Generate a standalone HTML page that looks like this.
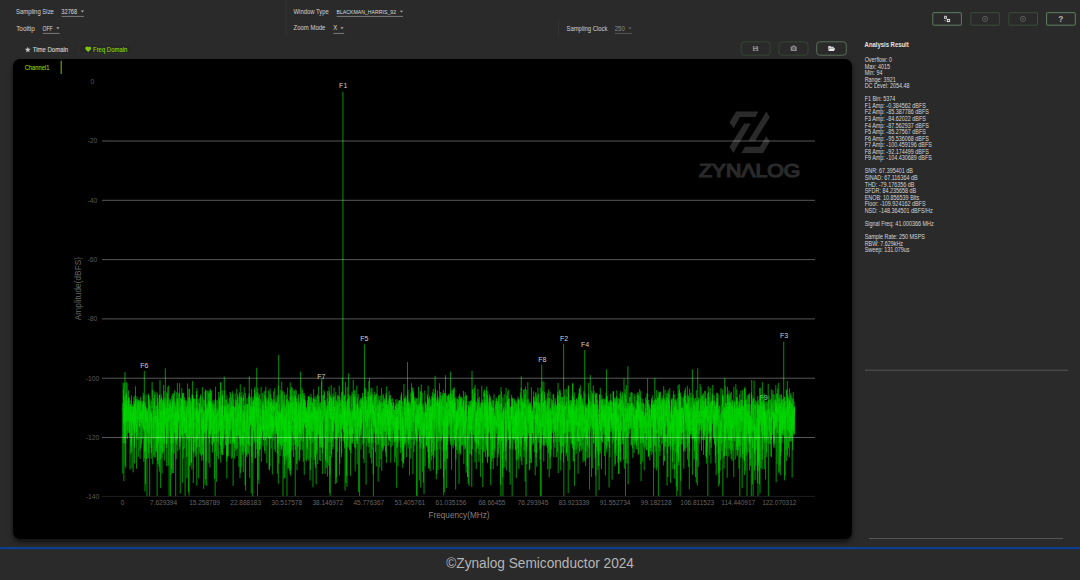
<!DOCTYPE html>
<html><head><meta charset="utf-8"><style>
html,body{margin:0;padding:0;width:1080px;height:580px;overflow:hidden;background:#2a2a2a;}
#panel{position:absolute;left:13px;top:59px;width:839px;height:480px;background:#000;border-radius:7px;box-shadow:0 3px 5px rgba(0,0,0,.6);}
svg{position:absolute;left:0;top:0;font-family:"Liberation Sans", sans-serif;}
</style></head><body>
<div id="panel"></div>
<svg width="1080" height="580" viewBox="0 0 1080 580">
<text x="15.94" y="13.77" font-size="6.6" fill="#d2d2d2" font-weight="normal" textLength="38.00" lengthAdjust="spacingAndGlyphs">Sampling Size</text><text x="61.34" y="13.77" font-size="6.6" fill="#dedede" font-weight="normal" textLength="15.90" lengthAdjust="spacingAndGlyphs">32768</text><text x="16.14" y="30.57" font-size="6.6" fill="#d2d2d2" font-weight="normal" textLength="18.60" lengthAdjust="spacingAndGlyphs">Tooltip</text><text x="42.44" y="30.57" font-size="6.6" fill="#dedede" font-weight="normal" textLength="10.30" lengthAdjust="spacingAndGlyphs">OFF</text><text x="293.54" y="13.87" font-size="6.6" fill="#d2d2d2" font-weight="normal" textLength="35.20" lengthAdjust="spacingAndGlyphs">Window Type</text><text x="336.45" y="13.73" font-size="6.2" fill="#dedede" font-weight="normal" textLength="59.67" lengthAdjust="spacingAndGlyphs">BLACKMAN_HARRIS_92</text><text x="293.54" y="30.47" font-size="6.6" fill="#d2d2d2" font-weight="normal" textLength="31.80" lengthAdjust="spacingAndGlyphs">Zoom Mode</text><text x="333.34" y="30.47" font-size="6.6" fill="#dedede" font-weight="normal" textLength="4.00" lengthAdjust="spacingAndGlyphs">X</text><text x="566.44" y="30.77" font-size="6.6" fill="#d2d2d2" font-weight="normal" textLength="41.10" lengthAdjust="spacingAndGlyphs">Sampling Clock</text><text x="614.74" y="30.77" font-size="6.6" fill="#8c8c8c" font-weight="normal" textLength="10.10" lengthAdjust="spacingAndGlyphs">250</text><path d="M80.80,10.50 L84.00,10.50 L82.40,12.40 Z" fill="#b0b0b0"/><rect x="61.6" y="15.90" width="22.40" height="1" fill="#7a7a7a"/><path d="M56.30,27.30 L59.50,27.30 L57.90,29.20 Z" fill="#b0b0b0"/><rect x="42.7" y="32.90" width="16.90" height="1" fill="#7a7a7a"/><path d="M399.90,10.70 L403.10,10.70 L401.50,12.60 Z" fill="#b0b0b0"/><rect x="336.7" y="15.90" width="66.30" height="1" fill="#7a7a7a"/><path d="M340.40,27.30 L343.60,27.30 L342.00,29.20 Z" fill="#b0b0b0"/><rect x="333.3" y="32.90" width="10.90" height="1" fill="#7a7a7a"/><path d="M628.40,27.60 L631.60,27.60 L630.00,29.50 Z" fill="#6a6a6a"/><rect x="615" y="32.90" width="17.00" height="1" fill="#555"/><rect x="285.6" y="0" width="1" height="35.5" fill="#333333"/><rect x="558" y="21" width="1" height="15" fill="#333333"/><rect x="932.80" y="12.70" width="28.60" height="12.50" rx="0.5" fill="none" stroke="#5f7d5f" stroke-width="1"/><rect x="970.80" y="12.70" width="28.50" height="12.50" rx="0.5" fill="none" stroke="#3b4c3b" stroke-width="1"/><rect x="1008.90" y="12.70" width="28.60" height="12.50" rx="0.5" fill="none" stroke="#3b4c3b" stroke-width="1"/><rect x="1046.60" y="12.70" width="28.70" height="12.50" rx="0.5" fill="none" stroke="#5f7d5f" stroke-width="1"/><rect x="944.0" y="15.8" width="3.0" height="3.1" fill="#b8b8b8"/><rect x="945.0" y="16.9" width="1.0" height="1.0" fill="#555"/><rect x="946.8" y="18.9" width="3.3" height="3.2" fill="#dcdcdc"/><rect x="947.9" y="20.0" width="1.2" height="1.0" fill="#444"/><rect x="944.0" y="20.3" width="1.9" height="0.8" fill="#8a8a8a"/><circle cx="985.0" cy="18.9" r="2.6" fill="none" stroke="#6a6a6a" stroke-width="0.75"/><circle cx="985.0" cy="18.9" r="0.9" fill="#5a5a5a"/><circle cx="1023.0" cy="18.9" r="2.6" fill="none" stroke="#6a6a6a" stroke-width="0.75"/><circle cx="1023.0" cy="18.9" r="0.9" fill="#5a5a5a"/><text x="1060.80" y="21.89" font-size="8.4" fill="#b4b4b4" font-weight="bold" text-anchor="middle">?</text><rect x="741.20" y="41.90" width="29.00" height="13.30" rx="3" fill="none" stroke="#354535" stroke-width="1"/><rect x="779.00" y="41.90" width="29.00" height="13.30" rx="3" fill="none" stroke="#354535" stroke-width="1"/><rect x="816.70" y="41.80" width="29.60" height="13.40" rx="3" fill="none" stroke="#566f56" stroke-width="1"/><path d="M752.9,45.9 h4.2 l1.1,1.1 v4.0 h-5.3 z" fill="#8a8a8a"/><rect x="753.9" y="46.4" width="2.6" height="1.3" fill="#2a2a2a"/><rect x="754.3" y="49.0" width="2.5" height="1.3" fill="#2a2a2a"/><path d="M790.7,46.4 h1.5 l0.5,-0.9 h2.0 l0.5,0.9 h1.5 v4.6 h-6 z" fill="#8a8a8a"/><circle cx="793.7" cy="48.6" r="1.3" fill="#2a2a2a"/><circle cx="793.7" cy="48.6" r="0.7" fill="#8a8a8a"/><path d="M828.2,46.0 h2.4 l0.6,0.7 h2.6 v1.2 h-4.5 l-1.1,3.0 z" fill="#d0d0d0"/><path d="M829.6,48.3 h5.6 l-1.2,2.7 h-5.7 z" fill="#e8e8e8"/><rect x="79.4" y="44.7" width="52.4" height="8.8" fill="#272727" stroke="#303030" stroke-width="0.8"/><polygon points="27.80,46.70 28.59,48.71 30.75,48.84 29.08,50.22 29.62,52.31 27.80,51.15 25.98,52.31 26.52,50.22 24.85,48.84 27.01,48.71" fill="#c4c4c4"/><text x="32.83" y="51.84" font-size="6.8" fill="#d4d4d4" font-weight="normal" textLength="35.31" lengthAdjust="spacingAndGlyphs" stroke="#d4d4d4" stroke-width="0.12">Time Domain</text><path d="M88.2,52.1 L85.6,49.4 A1.45,1.45 0 0 1 88.2,47.3 A1.45,1.45 0 0 1 90.8,49.4 Z" fill="#7cc800"/><text x="93.03" y="51.84" font-size="6.8" fill="#86cc00" font-weight="normal" textLength="34.31" lengthAdjust="spacingAndGlyphs" stroke="#86cc00" stroke-width="0.15">Freq Domain</text><text x="24.72" y="70.01" font-size="7.0" fill="#86c800" font-weight="normal" textLength="24.62" lengthAdjust="spacingAndGlyphs" stroke="#86c800" stroke-width="0.15">Channel1</text><rect x="60.6" y="60.7" width="1.2" height="13.3" fill="#6aa000"/><text x="864.62" y="46.71" font-size="7.0" fill="#e4e4e4" font-weight="bold" textLength="44.12" lengthAdjust="spacingAndGlyphs">Analysis Result</text><text x="864.65" y="62.07" font-size="6.6" fill="#d6d6d6" textLength="27.41" lengthAdjust="spacingAndGlyphs">Overflow: 0</text><text x="864.65" y="68.62" font-size="6.6" fill="#d6d6d6" textLength="25.31" lengthAdjust="spacingAndGlyphs">Max: 4015</text><text x="864.65" y="75.18" font-size="6.6" fill="#d6d6d6" textLength="17.77" lengthAdjust="spacingAndGlyphs">Min: 94</text><text x="864.65" y="81.73" font-size="6.6" fill="#d6d6d6" textLength="31.04" lengthAdjust="spacingAndGlyphs">Range: 3921</text><text x="864.65" y="88.28" font-size="6.6" fill="#d6d6d6" textLength="44.89" lengthAdjust="spacingAndGlyphs">DC Level: 2054.48</text><text x="864.65" y="101.39" font-size="6.6" fill="#d6d6d6" textLength="30.73" lengthAdjust="spacingAndGlyphs">F1 Bin: 5374</text><text x="864.65" y="107.94" font-size="6.6" fill="#d6d6d6" textLength="61.16" lengthAdjust="spacingAndGlyphs">F1 Amp: -0.384562 dBFS</text><text x="864.65" y="114.49" font-size="6.6" fill="#d6d6d6" textLength="64.17" lengthAdjust="spacingAndGlyphs">F2 Amp: -85.387786 dBFS</text><text x="864.65" y="121.05" font-size="6.6" fill="#d6d6d6" textLength="61.16" lengthAdjust="spacingAndGlyphs">F3 Amp: -84.62022 dBFS</text><text x="864.65" y="127.60" font-size="6.6" fill="#d6d6d6" textLength="64.17" lengthAdjust="spacingAndGlyphs">F4 Amp: -87.562937 dBFS</text><text x="864.65" y="134.15" font-size="6.6" fill="#d6d6d6" textLength="61.16" lengthAdjust="spacingAndGlyphs">F5 Amp: -85.27567 dBFS</text><text x="864.65" y="140.71" font-size="6.6" fill="#d6d6d6" textLength="64.17" lengthAdjust="spacingAndGlyphs">F6 Amp: -95.536068 dBFS</text><text x="864.65" y="147.26" font-size="6.6" fill="#d6d6d6" textLength="67.18" lengthAdjust="spacingAndGlyphs">F7 Amp: -100.459196 dBFS</text><text x="864.65" y="153.81" font-size="6.6" fill="#d6d6d6" textLength="64.17" lengthAdjust="spacingAndGlyphs">F8 Amp: -92.174499 dBFS</text><text x="864.65" y="160.37" font-size="6.6" fill="#d6d6d6" textLength="67.18" lengthAdjust="spacingAndGlyphs">F9 Amp: -104.430689 dBFS</text><text x="864.65" y="173.47" font-size="6.6" fill="#d6d6d6" textLength="48.21" lengthAdjust="spacingAndGlyphs">SNR: 67.395401 dB</text><text x="864.65" y="180.02" font-size="6.6" fill="#d6d6d6" textLength="52.93" lengthAdjust="spacingAndGlyphs">SINAD: 67.116364 dB</text><text x="864.65" y="186.58" font-size="6.6" fill="#d6d6d6" textLength="49.71" lengthAdjust="spacingAndGlyphs">THD: -79.176356 dB</text><text x="864.65" y="193.13" font-size="6.6" fill="#d6d6d6" textLength="51.52" lengthAdjust="spacingAndGlyphs">SFDR: 84.235658 dB</text><text x="864.65" y="199.68" font-size="6.6" fill="#d6d6d6" textLength="54.53" lengthAdjust="spacingAndGlyphs">ENOB: 10.856539 Bits</text><text x="864.65" y="206.24" font-size="6.6" fill="#d6d6d6" textLength="60.86" lengthAdjust="spacingAndGlyphs">Floor: -109.924162 dBFS</text><text x="864.65" y="212.79" font-size="6.6" fill="#d6d6d6" textLength="68.08" lengthAdjust="spacingAndGlyphs">NSD: -148.364501 dBFS/Hz</text><text x="864.65" y="225.90" font-size="6.6" fill="#d6d6d6" textLength="68.99" lengthAdjust="spacingAndGlyphs">Signal Freq: 41.000366 MHz</text><text x="864.65" y="239.00" font-size="6.6" fill="#d6d6d6" textLength="60.25" lengthAdjust="spacingAndGlyphs">Sample Rate: 250 MSPS</text><text x="864.65" y="245.55" font-size="6.6" fill="#d6d6d6" textLength="38.45" lengthAdjust="spacingAndGlyphs">RBW: 7.629kHz</text><text x="864.65" y="252.11" font-size="6.6" fill="#d6d6d6" textLength="44.90" lengthAdjust="spacingAndGlyphs">Sweep: 131.079us</text><rect x="865" y="369.7" width="203" height="1" fill="#555555"/><rect x="869" y="538" width="194" height="1" fill="#555555"/><rect x="0" y="547" width="1080" height="2.2" fill="#0b3e8e"/><text x="446.24" y="568.02" font-size="14.0" fill="#b6b6b6" font-weight="normal" textLength="187.74" lengthAdjust="spacingAndGlyphs">©Zynalog Semiconductor 2024</text>
<text x="92.5" y="84.04" font-size="6.8" fill="#585858" text-anchor="middle">0</text><text x="92.5" y="143.34" font-size="6.8" fill="#585858" text-anchor="middle">-20</text><text x="92.5" y="202.64" font-size="6.8" fill="#585858" text-anchor="middle">-40</text><text x="92.5" y="261.94" font-size="6.8" fill="#585858" text-anchor="middle">-60</text><text x="92.5" y="321.24" font-size="6.8" fill="#585858" text-anchor="middle">-80</text><text x="92.5" y="380.54" font-size="6.8" fill="#585858" text-anchor="middle">-100</text><text x="92.5" y="439.84" font-size="6.8" fill="#585858" text-anchor="middle">-120</text><text x="92.5" y="499.14" font-size="6.8" fill="#585858" text-anchor="middle">-140</text><text x="122.50" y="504.74" font-size="6.5" fill="#646464" text-anchor="middle">0</text><text x="163.55" y="504.74" font-size="6.5" fill="#646464" text-anchor="middle">7.629394</text><text x="204.60" y="504.74" font-size="6.5" fill="#646464" text-anchor="middle">15.258789</text><text x="245.65" y="504.74" font-size="6.5" fill="#646464" text-anchor="middle">22.888183</text><text x="286.70" y="504.74" font-size="6.5" fill="#646464" text-anchor="middle">30.517578</text><text x="327.75" y="504.74" font-size="6.5" fill="#646464" text-anchor="middle">38.146972</text><text x="368.80" y="504.74" font-size="6.5" fill="#646464" text-anchor="middle">45.776367</text><text x="409.85" y="504.74" font-size="6.5" fill="#646464" text-anchor="middle">53.405761</text><text x="450.90" y="504.74" font-size="6.5" fill="#646464" text-anchor="middle">61.035156</text><text x="491.95" y="504.74" font-size="6.5" fill="#646464" text-anchor="middle">68.66455</text><text x="533.00" y="504.74" font-size="6.5" fill="#646464" text-anchor="middle">76.293945</text><text x="574.05" y="504.74" font-size="6.5" fill="#646464" text-anchor="middle">83.923339</text><text x="615.10" y="504.74" font-size="6.5" fill="#646464" text-anchor="middle">91.552734</text><text x="656.15" y="504.74" font-size="6.5" fill="#646464" text-anchor="middle">99.182128</text><text x="697.20" y="504.74" font-size="6.5" fill="#646464" text-anchor="middle">106.811523</text><text x="738.25" y="504.74" font-size="6.5" fill="#646464" text-anchor="middle">114.440917</text><text x="779.30" y="504.74" font-size="6.5" fill="#646464" text-anchor="middle">122.070312</text><text transform="translate(77.8 288.6) rotate(-90)" y="2.86" font-size="8.3" fill="#646464" text-anchor="middle">Amplitude(dBFS)</text><text x="459" y="518.12" font-size="8.2" fill="#808080" text-anchor="middle">Frequency(MHz)</text><g fill="#ffffff" fill-opacity="0.165"><polygon points="736.1,111.4 758.4,111.4 755.5,117.1 739.9,117.1 733.7,128.2 729.5,122.5"/><polygon points="744.2,123.5 750.8,123.5 733.3,152.9 729.5,146.7"/><polygon points="766.4,111.6 769.8,117.3 755.1,140.8 748.4,140.8"/><polygon points="741.3,152.9 763.1,152.9 769.8,141.5 766.4,136.3 759.8,146.7 745.1,146.7"/></g><g opacity="0.16"><text x="698.90" y="177.35" font-size="17.6" fill="#ffffff" font-weight="normal" textLength="101.36" lengthAdjust="spacingAndGlyphs" stroke="#ffffff" stroke-width="1.2" stroke-linejoin="round">ZYNΛLOG</text></g><text x="343.20" y="88.31" font-size="7.0" fill="#cfcfcf" font-weight="normal" text-anchor="middle">F1</text><text x="564.00" y="340.61" font-size="7.0" fill="#cfcfcf" font-weight="normal" text-anchor="middle">F2</text><text x="784.00" y="338.41" font-size="7.0" fill="#cfcfcf" font-weight="normal" text-anchor="middle">F3</text><text x="585.00" y="347.01" font-size="7.0" fill="#cfcfcf" font-weight="normal" text-anchor="middle">F4</text><text x="364.40" y="341.41" font-size="7.0" fill="#cfcfcf" font-weight="normal" text-anchor="middle">F5</text><text x="144.30" y="368.41" font-size="7.0" fill="#cfcfcf" font-weight="normal" text-anchor="middle">F6</text><text x="321.40" y="378.71" font-size="7.0" fill="#cfcfcf" font-weight="normal" text-anchor="middle">F7</text><text x="542.30" y="362.01" font-size="7.0" fill="#cfcfcf" font-weight="normal" text-anchor="middle">F8</text><text x="763.50" y="400.41" font-size="7.0" fill="#cfcfcf" font-weight="normal" text-anchor="middle">F9</text><path d="M122.50,403.0 122.58,407.0 122.66,423.8 122.75,473.4 122.83,408.2 122.91,409.6 122.99,401.9 123.07,390.4 123.16,382.5 123.24,418.3 123.32,443.4 123.40,398.8 123.48,389.7 123.57,413.2 123.65,413.3 123.73,423.0 123.81,410.9 123.90,481.0 123.98,426.5 124.06,386.3 124.14,383.2 124.22,391.9 124.31,424.4 124.39,403.2 124.47,438.8 124.55,404.8 124.63,443.4 124.72,396.2 124.80,412.1 124.88,411.0 124.96,372.0 125.04,409.0 125.13,465.7 125.21,406.4 125.29,416.6 125.37,400.4 125.45,424.7 125.54,414.4 125.62,443.4 125.70,396.7 125.78,467.9 125.86,419.9 125.95,411.4 126.03,422.2 126.11,381.8 126.19,397.3 126.28,392.9 126.36,411.7 126.44,436.4 126.52,393.7 126.60,403.5 126.69,421.5 126.77,399.9 126.85,414.9 126.93,407.6 127.01,383.1 127.10,404.5 127.18,430.3 127.26,426.0 127.34,413.7 127.42,408.1 127.51,439.0 127.59,419.1 127.67,420.0 127.75,405.8 127.83,415.3 127.92,420.4 128.00,400.5 128.08,407.7 128.16,433.2 128.24,405.8 128.33,398.1 128.41,420.6 128.49,409.8 128.57,390.4 128.66,395.2 128.74,408.8 128.82,419.6 128.90,432.7 128.98,397.7 129.07,430.5 129.15,421.0 129.23,396.8 129.31,413.4 129.39,425.7 129.48,432.3 129.56,428.7 129.64,407.4 129.72,436.7 129.80,406.6 129.89,423.7 129.97,458.8 130.05,469.6 130.13,424.7 130.21,404.6 130.30,422.9 130.38,414.5 130.46,421.3 130.54,409.9 130.62,404.2 130.71,440.2 130.79,453.6 130.87,400.7 130.95,428.6 131.04,446.2 131.12,406.8 131.20,414.7 131.28,416.0 131.36,419.1 131.45,442.3 131.53,395.3 131.61,451.8 131.69,425.3 131.77,422.4 131.86,412.6 131.94,468.1 132.02,432.9 132.10,427.6 132.18,413.1 132.27,404.4 132.35,413.0 132.43,413.7 132.51,421.7 132.59,406.8 132.68,435.6 132.76,420.1 132.84,413.5 132.92,423.8 133.00,406.4 133.09,452.0 133.17,472.4 133.25,415.6 133.33,406.4 133.42,427.8 133.50,407.1 133.58,420.4 133.66,430.4 133.74,414.2 133.83,396.9 133.91,402.1 133.99,431.5 134.07,401.4 134.15,411.2 134.24,448.1 134.32,403.8 134.40,414.0 134.48,463.4 134.56,427.2 134.65,445.6 134.73,416.3 134.81,419.8 134.89,395.5 134.97,427.9 135.06,403.8 135.14,433.3 135.22,419.8 135.30,406.9 135.38,423.2 135.47,386.2 135.55,425.0 135.63,426.1 135.71,399.3 135.79,412.4 135.88,403.7 135.96,402.3 136.04,429.3 136.12,401.7 136.21,399.1 136.29,438.6 136.37,423.8 136.45,423.8 136.53,468.7 136.62,428.0 136.70,409.6 136.78,426.7 136.86,427.2 136.94,432.0 137.03,396.4 137.11,422.9 137.19,411.7 137.27,436.0 137.35,404.3 137.44,403.5 137.52,415.2 137.60,419.5 137.68,430.0 137.76,440.0 137.85,400.2 137.93,419.2 138.01,399.3 138.09,413.5 138.17,437.1 138.26,456.9 138.34,446.9 138.42,414.1 138.50,403.1 138.59,420.4 138.67,414.4 138.75,399.9 138.83,403.2 138.91,401.7 139.00,410.9 139.08,401.8 139.16,427.0 139.24,426.5 139.32,419.3 139.41,426.1 139.49,401.5 139.57,427.3 139.65,407.8 139.73,426.3 139.82,413.2 139.90,450.3 139.98,414.7 140.06,458.9 140.14,441.5 140.23,400.3 140.31,409.6 140.39,412.9 140.47,396.9 140.55,418.1 140.64,418.5 140.72,411.0 140.80,422.3 140.88,415.0 140.97,401.5 141.05,447.9 141.13,415.3 141.21,412.7 141.29,419.1 141.38,411.3 141.46,422.6 141.54,420.6 141.62,421.6 141.70,443.6 141.79,434.0 141.87,410.3 141.95,400.7 142.03,425.0 142.11,424.2 142.20,404.5 142.28,438.8 142.36,432.6 142.44,409.8 142.52,414.3 142.61,427.5 142.69,413.8 142.77,404.2 142.85,419.8 142.93,402.2 143.02,404.3 143.10,415.4 143.18,392.7 143.26,411.5 143.35,414.8 143.43,429.0 143.51,427.1 143.59,401.2 143.67,406.3 143.76,461.7 143.84,395.8 143.92,421.7 144.00,431.4 144.08,402.6 144.17,425.9 144.25,430.7 144.33,371.0 144.41,427.0 144.49,428.6 144.58,451.4 144.66,438.0 144.74,437.4 144.82,457.8 144.90,425.4 144.99,491.5 145.07,423.8 145.15,402.7 145.23,423.2 145.31,410.2 145.40,424.2 145.48,407.4 145.56,484.1 145.64,405.8 145.73,451.3 145.81,423.6 145.89,412.2 145.97,394.6 146.05,421.6 146.14,429.1 146.22,409.2 146.30,410.3 146.38,421.3 146.46,416.9 146.55,459.0 146.63,437.7 146.71,437.8 146.79,411.3 146.87,407.7 146.96,496.4 147.04,409.5 147.12,409.7 147.20,421.4 147.28,411.0 147.37,413.0 147.45,432.2 147.53,429.5 147.61,411.4 147.69,433.7 147.78,426.0 147.86,418.1 147.94,442.3 148.02,420.0 148.11,416.1 148.19,405.5 148.27,393.4 148.35,458.1 148.43,416.2 148.52,395.3 148.60,403.1 148.68,406.5 148.76,453.5 148.84,435.5 148.93,428.7 149.01,402.2 149.09,396.0 149.17,415.5 149.25,422.0 149.34,427.5 149.42,423.6 149.50,434.5 149.58,403.1 149.66,496.4 149.75,426.4 149.83,429.7 149.91,399.1 149.99,426.4 150.07,421.3 150.16,405.6 150.24,443.7 150.32,413.4 150.40,412.0 150.49,410.3 150.57,415.7 150.65,417.6 150.73,422.6 150.81,418.8 150.90,413.1 150.98,419.2 151.06,414.1 151.14,448.1 151.22,400.8 151.31,458.7 151.39,412.0 151.47,427.4 151.55,453.0 151.63,426.6 151.72,413.4 151.80,436.0 151.88,425.9 151.96,414.0 152.04,411.5 152.13,382.1 152.21,408.7 152.29,389.8 152.37,399.6 152.45,409.7 152.54,416.5 152.62,451.8 152.70,464.3 152.78,432.9 152.87,417.5 152.95,428.8 153.03,410.5 153.11,438.8 153.19,426.9 153.28,421.4 153.36,438.5 153.44,418.7 153.52,408.7 153.60,398.1 153.69,400.4 153.77,455.4 153.85,405.0 153.93,416.0 154.01,420.5 154.10,391.3 154.18,403.2 154.26,457.0 154.34,420.7 154.42,401.2 154.51,404.9 154.59,398.7 154.67,394.3 154.75,437.7 154.83,418.0 154.92,405.5 155.00,418.9 155.08,423.3 155.16,415.9 155.25,457.7 155.33,456.3 155.41,417.9 155.49,415.8 155.57,421.5 155.66,410.6 155.74,433.1 155.82,440.5 155.90,450.9 155.98,391.8 156.07,410.5 156.15,415.4 156.23,439.2 156.31,416.4 156.39,444.9 156.48,452.1 156.56,445.4 156.64,442.0 156.72,418.4 156.80,406.2 156.89,447.3 156.97,405.3 157.05,420.5 157.13,496.4 157.21,437.2 157.30,411.9 157.38,443.3 157.46,393.2 157.54,454.4 157.63,460.4 157.71,397.8 157.79,427.4 157.87,438.5 157.95,459.8 158.04,464.0 158.12,402.0 158.20,412.6 158.28,426.8 158.36,422.8 158.45,443.9 158.53,421.4 158.61,415.9 158.69,409.0 158.77,440.8 158.86,418.4 158.94,448.5 159.02,466.6 159.10,411.3 159.18,395.1 159.27,421.0 159.35,471.6 159.43,423.1 159.51,394.9 159.59,413.7 159.68,423.6 159.76,422.8 159.84,438.5 159.92,403.4 160.01,380.0 160.09,406.2 160.17,407.8 160.25,459.3 160.33,404.6 160.42,399.7 160.50,431.0 160.58,488.1 160.66,426.4 160.74,411.0 160.83,442.0 160.91,411.3 160.99,428.3 161.07,398.1 161.15,448.3 161.24,394.3 161.32,414.0 161.40,414.1 161.48,411.0 161.56,396.8 161.65,397.6 161.73,422.2 161.81,457.5 161.89,410.8 161.97,473.5 162.06,410.8 162.14,431.9 162.22,412.1 162.30,401.0 162.38,399.7 162.47,400.4 162.55,420.6 162.63,452.3 162.71,420.3 162.80,412.5 162.88,401.8 162.96,453.4 163.04,427.6 163.12,402.9 163.21,409.1 163.29,441.0 163.37,399.7 163.45,403.8 163.53,436.6 163.62,384.9 163.70,413.2 163.78,406.3 163.86,436.7 163.94,451.0 164.03,391.0 164.11,425.1 164.19,443.8 164.27,412.7 164.35,460.6 164.44,397.8 164.52,423.9 164.60,423.4 164.68,403.8 164.76,421.6 164.85,443.6 164.93,408.4 165.01,421.5 165.09,420.6 165.18,412.0 165.26,414.1 165.34,368.3 165.42,416.7 165.50,420.0 165.59,428.2 165.67,429.1 165.75,399.3 165.83,408.3 165.91,425.8 166.00,417.4 166.08,425.2 166.16,409.9 166.24,407.1 166.32,414.2 166.41,448.0 166.49,424.7 166.57,448.3 166.65,466.0 166.73,392.2 166.82,443.4 166.90,416.4 166.98,408.3 167.06,444.2 167.14,400.9 167.23,413.8 167.31,394.9 167.39,393.7 167.47,396.5 167.56,434.6 167.64,424.4 167.72,387.0 167.80,427.9 167.88,415.5 167.97,424.4 168.05,437.6 168.13,397.9 168.21,465.5 168.29,408.4 168.38,418.9 168.46,414.0 168.54,422.1 168.62,407.6 168.70,385.5 168.79,409.3 168.87,410.6 168.95,427.9 169.03,436.2 169.11,495.9 169.20,406.8 169.28,403.6 169.36,413.7 169.44,430.6 169.52,413.4 169.61,413.7 169.69,404.2 169.77,419.2 169.85,399.7 169.94,412.3 170.02,404.8 170.10,421.5 170.18,412.3 170.26,402.0 170.35,437.4 170.43,399.2 170.51,496.4 170.59,460.9 170.67,437.6 170.76,414.2 170.84,431.7 170.92,438.1 171.00,443.7 171.08,426.8 171.17,406.7 171.25,409.8 171.33,475.2 171.41,407.7 171.49,425.6 171.58,450.8 171.66,468.5 171.74,403.0 171.82,395.9 171.90,452.1 171.99,421.9 172.07,440.0 172.15,443.8 172.23,422.3 172.32,393.5 172.40,419.3 172.48,401.2 172.56,473.0 172.64,427.6 172.73,425.3 172.81,402.3 172.89,417.2 172.97,406.8 173.05,398.4 173.14,435.7 173.22,442.6 173.30,426.1 173.38,394.8 173.46,425.3 173.55,473.1 173.63,420.8 173.71,425.9 173.79,392.8 173.87,406.5 173.96,425.0 174.04,413.1 174.12,433.2 174.20,453.5 174.28,421.0 174.37,430.7 174.45,432.9 174.53,402.6 174.61,390.4 174.70,422.0 174.78,414.9 174.86,432.9 174.94,401.4 175.02,401.5 175.11,424.9 175.19,439.5 175.27,405.7 175.35,417.1 175.43,406.5 175.52,431.8 175.60,412.3 175.68,496.3 175.76,414.9 175.84,442.6 175.93,403.6 176.01,430.0 176.09,459.1 176.17,449.7 176.25,432.6 176.34,440.8 176.42,411.8 176.50,432.6 176.58,409.2 176.66,392.3 176.75,444.8 176.83,400.2 176.91,398.6 176.99,418.6 177.08,439.6 177.16,407.0 177.24,432.2 177.32,414.1 177.40,383.1 177.49,438.9 177.57,398.6 177.65,423.3 177.73,451.2 177.81,420.7 177.90,399.2 177.98,407.0 178.06,429.2 178.14,401.9 178.22,420.9 178.31,411.3 178.39,422.5 178.47,421.3 178.55,415.7 178.63,415.3 178.72,421.0 178.80,393.7 178.88,411.2 178.96,421.8 179.04,436.4 179.13,392.6 179.21,403.9 179.29,418.9 179.37,449.5 179.46,426.8 179.54,423.0 179.62,383.2 179.70,401.5 179.78,409.7 179.87,441.0 179.95,446.5 180.03,407.9 180.11,414.1 180.19,419.2 180.28,493.4 180.36,425.1 180.44,441.7 180.52,397.8 180.60,411.9 180.69,405.5 180.77,414.3 180.85,416.0 180.93,426.4 181.01,413.6 181.10,438.2 181.18,426.7 181.26,398.6 181.34,418.9 181.42,411.1 181.51,417.2 181.59,399.1 181.67,433.8 181.75,393.6 181.84,388.3 181.92,435.8 182.00,429.7 182.08,399.4 182.16,426.2 182.25,395.2 182.33,435.3 182.41,423.9 182.49,438.3 182.57,482.8 182.66,392.9 182.74,427.1 182.82,410.9 182.90,438.2 182.98,393.1 183.07,413.4 183.15,401.3 183.23,429.3 183.31,443.6 183.39,458.4 183.48,447.2 183.56,448.7 183.64,392.9 183.72,426.8 183.80,407.1 183.89,416.7 183.97,422.0 184.05,412.5 184.13,446.3 184.22,448.4 184.30,400.0 184.38,423.4 184.46,397.4 184.54,428.6 184.63,433.1 184.71,411.8 184.79,427.9 184.87,432.4 184.95,416.7 185.04,428.9 185.12,496.4 185.20,425.5 185.28,432.8 185.36,430.1 185.45,417.0 185.53,421.1 185.61,401.5 185.69,435.4 185.77,416.7 185.86,409.8 185.94,400.3 186.02,412.8 186.10,436.3 186.18,423.2 186.27,428.6 186.35,431.7 186.43,408.9 186.51,423.9 186.60,405.9 186.68,456.8 186.76,414.9 186.84,431.4 186.92,478.3 187.01,420.4 187.09,439.5 187.17,401.0 187.25,410.2 187.33,436.9 187.42,425.9 187.50,394.7 187.58,383.5 187.66,409.7 187.74,404.1 187.83,417.2 187.91,414.7 187.99,406.5 188.07,413.5 188.15,409.7 188.24,412.3 188.32,411.3 188.40,492.0 188.48,424.2 188.56,427.8 188.65,397.4 188.73,432.7 188.81,438.6 188.89,404.5 188.97,389.3 189.06,495.5 189.14,412.2 189.22,407.1 189.30,388.6 189.39,441.8 189.47,397.1 189.55,420.6 189.63,429.7 189.71,440.4 189.80,466.5 189.88,433.8 189.96,409.8 190.04,465.3 190.12,421.6 190.21,419.4 190.29,427.8 190.37,398.1 190.45,436.5 190.53,424.9 190.62,405.4 190.70,425.0 190.78,402.5 190.86,434.7 190.94,400.7 191.03,418.9 191.11,420.2 191.19,462.5 191.27,418.4 191.35,422.8 191.44,440.4 191.52,462.5 191.60,414.0 191.68,419.4 191.77,429.6 191.85,469.4 191.93,465.5 192.01,415.3 192.09,394.3 192.18,415.0 192.26,413.6 192.34,394.9 192.42,420.7 192.50,416.5 192.59,381.1 192.67,434.6 192.75,395.7 192.83,438.4 192.91,411.4 193.00,419.4 193.08,450.7 193.16,398.5 193.24,412.1 193.32,483.0 193.41,397.8 193.49,404.3 193.57,453.0 193.65,399.5 193.73,420.0 193.82,429.8 193.90,443.3 193.98,436.3 194.06,408.6 194.15,414.4 194.23,413.3 194.31,416.4 194.39,428.2 194.47,418.7 194.56,419.6 194.64,398.4 194.72,417.4 194.80,419.6 194.88,451.7 194.97,422.4 195.05,457.1 195.13,446.9 195.21,399.3 195.29,415.4 195.38,414.8 195.46,419.3 195.54,410.4 195.62,411.5 195.70,410.8 195.79,418.2 195.87,427.2 195.95,442.0 196.03,408.0 196.11,455.4 196.20,408.5 196.28,394.3 196.36,448.4 196.44,410.6 196.53,420.4 196.61,391.1 196.69,409.3 196.77,485.6 196.85,428.2 196.94,388.1 197.02,410.7 197.10,427.7 197.18,439.8 197.26,407.3 197.35,402.7 197.43,421.2 197.51,447.1 197.59,407.6 197.67,422.0 197.76,412.6 197.84,439.5 197.92,411.3 198.00,421.0 198.08,416.5 198.17,414.1 198.25,438.7 198.33,399.2 198.41,405.7 198.49,421.9 198.58,416.4 198.66,478.3 198.74,410.1 198.82,423.0 198.91,425.0 198.99,434.0 199.07,418.4 199.15,412.8 199.23,434.9 199.32,402.9 199.40,411.3 199.48,447.0 199.56,403.8 199.64,417.0 199.73,452.3 199.81,397.3 199.89,411.8 199.97,413.6 200.05,410.1 200.14,411.4 200.22,410.7 200.30,447.6 200.38,454.1 200.46,420.7 200.55,406.0 200.63,396.0 200.71,412.1 200.79,401.3 200.87,393.9 200.96,408.2 201.04,455.9 201.12,454.7 201.20,454.3 201.29,409.0 201.37,410.7 201.45,409.1 201.53,429.5 201.61,404.8 201.70,460.6 201.78,439.6 201.86,411.5 201.94,407.1 202.02,429.2 202.11,444.2 202.19,408.3 202.27,413.8 202.35,399.9 202.43,387.1 202.52,435.6 202.60,419.1 202.68,454.6 202.76,418.6 202.84,431.3 202.93,413.9 203.01,455.1 203.09,397.3 203.17,430.5 203.25,430.6 203.34,460.2 203.42,412.6 203.50,411.5 203.58,429.9 203.67,488.8 203.75,413.6 203.83,440.4 203.91,406.9 203.99,399.9 204.08,406.2 204.16,400.6 204.24,426.4 204.32,424.1 204.40,410.6 204.49,427.1 204.57,433.3 204.65,431.2 204.73,431.8 204.81,424.9 204.90,432.4 204.98,424.9 205.06,484.8 205.14,391.6 205.22,397.9 205.31,430.4 205.39,391.5 205.47,430.1 205.55,389.7 205.63,479.2 205.72,405.0 205.80,404.6 205.88,412.5 205.96,410.0 206.05,461.5 206.13,389.9 206.21,408.0 206.29,421.0 206.37,403.9 206.46,436.7 206.54,414.0 206.62,485.8 206.70,434.3 206.78,415.4 206.87,431.2 206.95,408.9 207.03,425.4 207.11,414.8 207.19,410.1 207.28,407.4 207.36,416.9 207.44,407.8 207.52,429.4 207.60,415.6 207.69,411.4 207.77,414.8 207.85,391.0 207.93,414.7 208.01,400.3 208.10,391.1 208.18,420.9 208.26,406.6 208.34,402.6 208.43,417.4 208.51,438.0 208.59,408.7 208.67,412.6 208.75,393.2 208.84,401.4 208.92,463.2 209.00,401.0 209.08,410.1 209.16,401.6 209.25,408.7 209.33,430.5 209.41,443.1 209.49,422.0 209.57,413.0 209.66,434.2 209.74,393.3 209.82,418.8 209.90,467.5 209.98,394.7 210.07,388.7 210.15,433.4 210.23,390.2 210.31,432.4 210.39,400.7 210.48,436.7 210.56,403.4 210.64,417.0 210.72,420.5 210.81,434.5 210.89,391.3 210.97,406.9 211.05,403.3 211.13,419.6 211.22,411.2 211.30,428.0 211.38,402.8 211.46,429.7 211.54,398.4 211.63,390.5 211.71,409.3 211.79,420.7 211.87,426.1 211.95,445.6 212.04,422.6 212.12,444.3 212.20,403.1 212.28,407.7 212.36,411.0 212.45,407.2 212.53,452.5 212.61,412.0 212.69,409.7 212.77,423.8 212.86,429.1 212.94,400.5 213.02,414.2 213.10,434.4 213.18,443.7 213.27,411.3 213.35,404.4 213.43,434.2 213.51,441.9 213.60,409.9 213.68,441.7 213.76,413.8 213.84,412.2 213.92,420.6 214.01,434.3 214.09,400.3 214.17,411.3 214.25,417.2 214.33,418.5 214.42,478.8 214.50,415.7 214.58,434.6 214.66,414.5 214.74,403.8 214.83,422.2 214.91,416.2 214.99,419.5 215.07,407.9 215.15,496.2 215.24,427.1 215.32,408.5 215.40,398.9 215.48,406.6 215.56,386.7 215.65,451.6 215.73,423.4 215.81,406.2 215.89,431.4 215.98,428.7 216.06,428.8 216.14,429.6 216.22,400.3 216.30,441.0 216.39,413.4 216.47,419.7 216.55,481.8 216.63,414.7 216.71,423.0 216.80,434.6 216.88,418.3 216.96,408.7 217.04,421.4 217.12,427.5 217.21,455.9 217.29,420.5 217.37,418.9 217.45,411.3 217.53,412.5 217.62,416.1 217.70,415.6 217.78,399.7 217.86,414.3 217.94,415.4 218.03,442.5 218.11,409.3 218.19,432.7 218.27,427.1 218.36,420.1 218.44,453.4 218.52,458.9 218.60,433.1 218.68,420.9 218.77,392.0 218.85,402.3 218.93,429.6 219.01,410.3 219.09,397.7 219.18,400.3 219.26,426.5 219.34,410.2 219.42,430.5 219.50,400.7 219.59,410.6 219.67,406.2 219.75,414.8 219.83,395.7 219.91,413.4 220.00,436.9 220.08,401.3 220.16,411.7 220.24,426.3 220.32,414.6 220.41,445.1 220.49,418.3 220.57,390.7 220.65,382.7 220.74,462.6 220.82,382.2 220.90,413.9 220.98,417.7 221.06,445.9 221.15,405.8 221.23,451.3 221.31,454.6 221.39,419.7 221.47,421.0 221.56,452.3 221.64,407.5 221.72,428.9 221.80,422.6 221.88,406.7 221.97,404.6 222.05,434.8 222.13,394.3 222.21,424.0 222.29,390.4 222.38,424.6 222.46,396.8 222.54,455.0 222.62,395.6 222.70,439.7 222.79,454.9 222.87,405.5 222.95,440.6 223.03,435.8 223.12,415.1 223.20,431.2 223.28,438.5 223.36,436.0 223.44,418.3 223.53,418.4 223.61,416.4 223.69,430.9 223.77,448.3 223.85,424.4 223.94,432.7 224.02,438.1 224.10,432.9 224.18,421.8 224.26,376.7 224.35,385.6 224.43,429.4 224.51,416.5 224.59,408.6 224.67,421.1 224.76,405.8 224.84,416.6 224.92,390.7 225.00,395.5 225.08,434.4 225.17,421.6 225.25,405.8 225.33,422.3 225.41,445.2 225.50,424.0 225.58,404.5 225.66,400.0 225.74,399.8 225.82,403.3 225.91,423.6 225.99,445.0 226.07,407.2 226.15,420.6 226.23,415.9 226.32,413.4 226.40,433.4 226.48,413.2 226.56,460.2 226.64,461.5 226.73,399.6 226.81,436.8 226.89,478.4 226.97,395.5 227.05,433.3 227.14,455.8 227.22,421.1 227.30,405.3 227.38,457.5 227.46,418.7 227.55,425.6 227.63,421.5 227.71,404.2 227.79,402.5 227.88,455.0 227.96,410.6 228.04,442.0 228.12,413.8 228.20,456.3 228.29,442.3 228.37,433.8 228.45,416.8 228.53,417.3 228.61,403.5 228.70,407.2 228.78,424.3 228.86,421.0 228.94,444.2 229.02,433.8 229.11,404.5 229.19,435.9 229.27,431.3 229.35,397.8 229.43,410.0 229.52,437.6 229.60,432.4 229.68,422.4 229.76,419.7 229.84,429.1 229.93,414.0 230.01,430.8 230.09,391.9 230.17,400.9 230.26,421.7 230.34,416.4 230.42,408.1 230.50,443.8 230.58,413.5 230.67,416.3 230.75,393.7 230.83,401.8 230.91,416.0 230.99,423.2 231.08,429.4 231.16,405.9 231.24,458.6 231.32,410.1 231.40,397.3 231.49,409.1 231.57,414.8 231.65,401.3 231.73,420.5 231.81,415.1 231.90,418.1 231.98,411.0 232.06,415.9 232.14,407.5 232.22,412.7 232.31,412.5 232.39,457.8 232.47,391.4 232.55,441.8 232.64,410.2 232.72,405.3 232.80,429.6 232.88,436.6 232.96,443.2 233.05,394.2 233.13,485.8 233.21,425.7 233.29,421.6 233.37,399.5 233.46,413.4 233.54,443.8 233.62,406.1 233.70,425.9 233.78,407.3 233.87,415.8 233.95,441.0 234.03,418.8 234.11,421.2 234.19,433.7 234.28,443.6 234.36,406.6 234.44,418.5 234.52,458.6 234.60,448.4 234.69,435.8 234.77,429.4 234.85,447.5 234.93,422.3 235.02,407.9 235.10,411.6 235.18,393.4 235.26,395.2 235.34,429.1 235.43,399.8 235.51,413.4 235.59,451.0 235.67,449.4 235.75,426.6 235.84,407.1 235.92,425.6 236.00,434.8 236.08,417.8 236.16,426.8 236.25,401.6 236.33,412.1 236.41,449.2 236.49,424.0 236.57,436.0 236.66,420.8 236.74,388.8 236.82,407.9 236.90,431.9 236.98,418.8 237.07,456.0 237.15,399.7 237.23,429.9 237.31,448.3 237.40,422.8 237.48,406.6 237.56,394.3 237.64,402.3 237.72,424.5 237.81,413.6 237.89,435.7 237.97,411.5 238.05,421.4 238.13,397.0 238.22,408.9 238.30,416.0 238.38,406.2 238.46,435.6 238.54,415.6 238.63,413.3 238.71,403.7 238.79,410.6 238.87,411.5 238.95,466.8 239.04,431.4 239.12,414.4 239.20,438.6 239.28,392.4 239.36,410.3 239.45,436.4 239.53,424.5 239.61,403.8 239.69,408.5 239.77,394.8 239.86,420.1 239.94,478.0 240.02,429.1 240.10,443.8 240.19,443.2 240.27,384.3 240.35,427.4 240.43,472.9 240.51,428.9 240.60,407.5 240.68,446.3 240.76,397.5 240.84,422.9 240.92,420.7 241.01,405.2 241.09,414.9 241.17,415.0 241.25,421.6 241.33,400.8 241.42,396.5 241.50,442.7 241.58,461.5 241.66,467.2 241.74,411.8 241.83,391.8 241.91,422.7 241.99,443.2 242.07,408.3 242.15,398.3 242.24,414.5 242.32,431.6 242.40,420.9 242.48,444.6 242.57,435.8 242.65,451.8 242.73,410.1 242.81,416.2 242.89,454.8 242.98,419.3 243.06,416.8 243.14,414.0 243.22,418.8 243.30,472.1 243.39,394.6 243.47,400.5 243.55,398.0 243.63,412.6 243.71,438.4 243.80,410.8 243.88,439.1 243.96,405.6 244.04,446.2 244.12,428.6 244.21,387.2 244.29,399.9 244.37,409.8 244.45,432.1 244.53,413.3 244.62,431.9 244.70,409.9 244.78,404.6 244.86,417.8 244.95,452.1 245.03,429.7 245.11,485.5 245.19,437.1 245.27,412.7 245.36,406.3 245.44,392.9 245.52,407.0 245.60,490.6 245.68,451.7 245.77,432.5 245.85,433.3 245.93,420.9 246.01,422.6 246.09,436.9 246.18,414.7 246.26,403.8 246.34,418.4 246.42,434.4 246.50,442.3 246.59,455.2 246.67,411.4 246.75,456.9 246.83,416.8 246.91,398.1 247.00,420.1 247.08,443.4 247.16,405.2 247.24,435.5 247.33,421.6 247.41,414.2 247.49,425.4 247.57,428.5 247.65,404.2 247.74,421.0 247.82,404.1 247.90,452.8 247.98,417.3 248.06,418.4 248.15,444.0 248.23,441.5 248.31,454.3 248.39,427.0 248.47,444.9 248.56,419.9 248.64,411.3 248.72,396.5 248.80,439.2 248.88,423.7 248.97,415.9 249.05,393.3 249.13,407.6 249.21,429.0 249.29,376.4 249.38,413.1 249.46,417.2 249.54,446.6 249.62,477.7 249.71,395.8 249.79,409.1 249.87,430.5 249.95,446.2 250.03,398.2 250.12,426.5 250.20,416.1 250.28,425.1 250.36,423.1 250.44,405.5 250.53,420.7 250.61,418.1 250.69,408.8 250.77,412.2 250.85,422.6 250.94,406.0 251.02,424.3 251.10,397.4 251.18,407.6 251.26,493.4 251.35,415.8 251.43,425.0 251.51,403.8 251.59,388.8 251.67,415.4 251.76,456.7 251.84,430.1 251.92,401.2 252.00,463.0 252.09,448.8 252.17,421.4 252.25,409.6 252.33,445.4 252.41,440.4 252.50,427.5 252.58,420.5 252.66,496.4 252.74,402.0 252.82,420.9 252.91,397.1 252.99,418.5 253.07,407.8 253.15,424.2 253.23,406.9 253.32,431.4 253.40,400.3 253.48,411.2 253.56,427.6 253.64,399.4 253.73,423.6 253.81,429.6 253.89,423.2 253.97,440.8 254.05,418.3 254.14,402.9 254.22,395.7 254.30,403.1 254.38,423.5 254.47,400.9 254.55,389.3 254.63,436.4 254.71,407.1 254.79,442.9 254.88,408.7 254.96,386.8 255.04,399.0 255.12,420.6 255.20,458.4 255.29,441.2 255.37,422.7 255.45,427.0 255.53,403.1 255.61,393.5 255.70,409.9 255.78,457.7 255.86,398.1 255.94,411.1 256.02,395.8 256.11,442.2 256.19,435.2 256.27,419.1 256.35,406.6 256.43,397.8 256.52,416.7 256.60,412.9 256.68,367.7 256.76,423.3 256.85,408.6 256.93,423.2 257.01,449.0 257.09,406.1 257.17,392.4 257.26,392.0 257.34,407.1 257.42,441.8 257.50,496.4 257.58,427.7 257.67,444.6 257.75,387.8 257.83,454.0 257.91,414.9 257.99,397.0 258.08,479.5 258.16,403.1 258.24,425.5 258.32,442.8 258.40,416.8 258.49,415.8 258.57,408.5 258.65,411.8 258.73,398.0 258.81,426.6 258.90,484.1 258.98,393.4 259.06,400.3 259.14,456.3 259.23,420.1 259.31,395.1 259.39,398.8 259.47,449.8 259.55,424.5 259.64,431.9 259.72,439.3 259.80,445.7 259.88,423.7 259.96,448.8 260.05,440.3 260.13,408.3 260.21,410.3 260.29,449.7 260.37,418.6 260.46,399.2 260.54,437.0 260.62,416.3 260.70,419.7 260.78,415.2 260.87,444.2 260.95,427.4 261.03,410.1 261.11,386.8 261.19,406.5 261.28,430.4 261.36,461.7 261.44,427.6 261.52,437.0 261.61,431.2 261.69,435.3 261.77,418.0 261.85,437.3 261.93,426.8 262.02,414.8 262.10,409.9 262.18,413.7 262.26,402.2 262.34,419.1 262.43,393.2 262.51,416.9 262.59,431.3 262.67,404.5 262.75,418.3 262.84,429.5 262.92,422.2 263.00,405.2 263.08,446.4 263.16,420.4 263.25,431.0 263.33,424.3 263.41,430.1 263.49,400.5 263.57,440.2 263.66,408.6 263.74,439.7 263.82,413.5 263.90,419.8 263.99,391.5 264.07,392.2 264.15,418.8 264.23,410.9 264.31,435.3 264.40,436.3 264.48,418.9 264.56,426.2 264.64,434.0 264.72,450.7 264.81,423.9 264.89,395.0 264.97,411.4 265.05,453.6 265.13,390.6 265.22,440.3 265.30,425.4 265.38,423.7 265.46,398.2 265.54,440.6 265.63,418.7 265.71,427.7 265.79,421.1 265.87,386.6 265.95,417.2 266.04,397.4 266.12,415.9 266.20,401.7 266.28,430.2 266.36,409.9 266.45,406.1 266.53,437.6 266.61,425.4 266.69,411.1 266.78,463.0 266.86,444.7 266.94,424.4 267.02,445.7 267.10,420.7 267.19,435.4 267.27,399.4 267.35,430.6 267.43,429.7 267.51,410.5 267.60,405.7 267.68,437.5 267.76,419.1 267.84,414.6 267.92,413.4 268.01,430.1 268.09,397.4 268.17,398.7 268.25,402.5 268.33,411.5 268.42,390.5 268.50,435.1 268.58,438.3 268.66,399.8 268.74,438.5 268.83,408.6 268.91,422.1 268.99,426.6 269.07,469.4 269.16,432.7 269.24,419.7 269.32,414.2 269.40,427.0 269.48,470.4 269.57,416.1 269.65,402.9 269.73,427.7 269.81,409.2 269.89,392.6 269.98,466.3 270.06,388.4 270.14,427.6 270.22,438.1 270.30,435.1 270.39,414.7 270.47,402.0 270.55,414.6 270.63,427.2 270.71,413.3 270.80,438.9 270.88,394.9 270.96,407.3 271.04,407.1 271.12,419.5 271.21,448.5 271.29,403.5 271.37,432.2 271.45,398.2 271.54,437.8 271.62,415.4 271.70,426.9 271.78,411.2 271.86,401.6 271.95,413.1 272.03,433.1 272.11,434.1 272.19,399.2 272.27,428.2 272.36,474.5 272.44,415.8 272.52,432.7 272.60,417.1 272.68,428.8 272.77,405.7 272.85,429.7 272.93,431.0 273.01,404.2 273.09,411.5 273.18,440.8 273.26,400.3 273.34,435.5 273.42,416.1 273.50,431.1 273.59,421.2 273.67,391.3 273.75,407.4 273.83,411.8 273.92,402.2 274.00,425.9 274.08,421.8 274.16,423.0 274.24,427.7 274.33,418.8 274.41,410.4 274.49,407.3 274.57,406.3 274.65,411.4 274.74,388.2 274.82,449.4 274.90,415.6 274.98,433.6 275.06,399.2 275.15,410.5 275.23,411.1 275.31,452.0 275.39,419.8 275.47,421.4 275.56,412.5 275.64,425.2 275.72,404.4 275.80,425.5 275.88,402.6 275.97,415.4 276.05,419.1 276.13,433.7 276.21,419.1 276.30,426.5 276.38,431.7 276.46,416.5 276.54,430.4 276.62,402.6 276.71,434.6 276.79,423.4 276.87,405.1 276.95,402.1 277.03,415.5 277.12,394.9 277.20,453.7 277.28,397.3 277.36,473.7 277.44,429.8 277.53,411.0 277.61,444.5 277.69,421.2 277.77,438.4 277.85,422.9 277.94,430.7 278.02,420.4 278.10,447.2 278.18,385.6 278.26,414.0 278.35,483.6 278.43,434.5 278.51,411.8 278.59,423.8 278.68,355.0 278.76,443.3 278.84,412.7 278.92,421.8 279.00,463.4 279.09,411.0 279.17,413.3 279.25,426.4 279.33,431.1 279.41,413.7 279.50,429.5 279.58,404.0 279.66,415.3 279.74,422.6 279.82,395.4 279.91,443.2 279.99,414.6 280.07,411.8 280.15,456.0 280.23,432.2 280.32,423.0 280.40,413.2 280.48,445.2 280.56,415.0 280.64,419.1 280.73,407.7 280.81,389.9 280.89,404.8 280.97,417.9 281.06,424.5 281.14,412.7 281.22,415.3 281.30,448.8 281.38,408.7 281.47,439.3 281.55,408.6 281.63,450.2 281.71,381.7 281.79,426.0 281.88,412.6 281.96,392.4 282.04,412.0 282.12,443.1 282.20,412.1 282.29,405.3 282.37,446.0 282.45,409.8 282.53,429.2 282.61,424.5 282.70,419.1 282.78,390.7 282.86,423.9 282.94,471.5 283.02,496.4 283.11,399.7 283.19,427.6 283.27,430.1 283.35,417.6 283.44,416.1 283.52,445.9 283.60,456.7 283.68,403.0 283.76,429.3 283.85,429.8 283.93,422.6 284.01,391.9 284.09,478.5 284.17,417.8 284.26,427.2 284.34,442.0 284.42,421.3 284.50,442.0 284.58,395.0 284.67,403.7 284.75,464.7 284.83,417.5 284.91,477.8 284.99,408.9 285.08,407.2 285.16,423.1 285.24,407.0 285.32,456.0 285.40,417.2 285.49,450.1 285.57,404.6 285.65,414.4 285.73,433.2 285.82,435.0 285.90,413.8 285.98,423.8 286.06,422.7 286.14,460.6 286.23,410.7 286.31,439.6 286.39,406.0 286.47,394.4 286.55,441.5 286.64,417.2 286.72,399.3 286.80,456.5 286.88,436.4 286.96,496.4 287.05,421.9 287.13,399.4 287.21,408.3 287.29,427.1 287.37,454.8 287.46,420.5 287.54,397.7 287.62,387.5 287.70,392.1 287.78,416.1 287.87,419.7 287.95,468.6 288.03,436.6 288.11,421.5 288.20,442.8 288.28,400.6 288.36,436.4 288.44,413.3 288.52,401.4 288.61,430.8 288.69,467.7 288.77,410.2 288.85,403.7 288.93,455.2 289.02,405.4 289.10,452.5 289.18,422.6 289.26,470.5 289.34,409.1 289.43,457.3 289.51,411.7 289.59,422.2 289.67,457.3 289.75,465.2 289.84,425.9 289.92,396.5 290.00,410.8 290.08,473.9 290.16,427.1 290.25,382.5 290.33,412.6 290.41,389.4 290.49,450.6 290.57,421.7 290.66,475.9 290.74,402.8 290.82,427.5 290.90,470.5 290.99,406.6 291.07,405.0 291.15,403.8 291.23,418.4 291.31,428.3 291.40,426.9 291.48,404.0 291.56,386.9 291.64,429.5 291.72,445.5 291.81,434.5 291.89,400.8 291.97,395.4 292.05,450.6 292.13,425.6 292.22,432.2 292.30,387.8 292.38,419.2 292.46,414.6 292.54,422.1 292.63,402.4 292.71,420.5 292.79,409.6 292.87,397.2 292.95,424.7 293.04,435.8 293.12,407.0 293.20,414.2 293.28,400.6 293.37,390.7 293.45,401.2 293.53,456.9 293.61,438.5 293.69,426.9 293.78,419.2 293.86,439.4 293.94,401.8 294.02,405.0 294.10,418.1 294.19,434.7 294.27,419.7 294.35,428.1 294.43,408.3 294.51,421.0 294.60,391.0 294.68,422.7 294.76,444.7 294.84,397.0 294.92,433.0 295.01,439.2 295.09,389.4 295.17,407.4 295.25,496.4 295.33,425.3 295.42,449.8 295.50,395.1 295.58,434.0 295.66,397.4 295.75,422.1 295.83,436.0 295.91,440.7 295.99,414.0 296.07,443.7 296.16,416.1 296.24,390.4 296.32,398.6 296.40,430.1 296.48,424.3 296.57,401.6 296.65,463.8 296.73,402.8 296.81,413.9 296.89,409.7 296.98,470.0 297.06,398.8 297.14,415.9 297.22,447.2 297.30,417.2 297.39,426.4 297.47,414.5 297.55,436.8 297.63,420.1 297.71,421.2 297.80,430.0 297.88,446.7 297.96,457.0 298.04,460.1 298.13,411.5 298.21,398.1 298.29,396.7 298.37,446.5 298.45,422.5 298.54,405.4 298.62,416.5 298.70,394.1 298.78,434.5 298.86,412.2 298.95,423.0 299.03,417.2 299.11,410.7 299.19,432.1 299.27,422.9 299.36,430.9 299.44,401.9 299.52,418.5 299.60,461.2 299.68,418.1 299.77,458.2 299.85,423.5 299.93,403.8 300.01,430.1 300.09,406.6 300.18,432.8 300.26,403.8 300.34,434.9 300.42,399.9 300.51,371.7 300.59,449.7 300.67,446.8 300.75,405.9 300.83,396.0 300.92,394.3 301.00,421.2 301.08,441.5 301.16,432.9 301.24,399.1 301.33,405.4 301.41,398.0 301.49,438.3 301.57,439.5 301.65,410.3 301.74,415.6 301.82,420.1 301.90,387.8 301.98,414.7 302.06,425.7 302.15,416.8 302.23,426.1 302.31,433.3 302.39,390.1 302.47,417.2 302.56,417.5 302.64,450.2 302.72,445.5 302.80,404.7 302.89,427.9 302.97,425.3 303.05,424.9 303.13,429.5 303.21,393.7 303.30,461.8 303.38,410.8 303.46,441.6 303.54,398.5 303.62,402.6 303.71,414.0 303.79,403.0 303.87,425.0 303.95,410.1 304.03,393.0 304.12,409.1 304.20,400.0 304.28,474.8 304.36,415.4 304.44,399.8 304.53,423.3 304.61,395.9 304.69,398.6 304.77,408.4 304.85,425.8 304.94,410.1 305.02,422.9 305.10,412.6 305.18,421.5 305.27,403.0 305.35,400.7 305.43,411.8 305.51,428.2 305.59,401.7 305.68,418.8 305.76,459.8 305.84,425.2 305.92,421.3 306.00,407.1 306.09,417.9 306.17,428.6 306.25,417.4 306.33,409.8 306.41,438.4 306.50,407.5 306.58,461.2 306.66,419.7 306.74,421.4 306.82,412.3 306.91,447.0 306.99,424.4 307.07,416.9 307.15,422.0 307.23,412.2 307.32,420.1 307.40,414.0 307.48,449.4 307.56,446.9 307.65,400.2 307.73,458.4 307.81,444.0 307.89,403.4 307.97,416.1 308.06,415.2 308.14,433.8 308.22,396.0 308.30,438.0 308.38,397.1 308.47,410.7 308.55,414.3 308.63,425.6 308.71,417.4 308.79,428.2 308.88,460.4 308.96,418.3 309.04,395.7 309.12,421.9 309.20,397.0 309.29,412.3 309.37,406.3 309.45,435.3 309.53,407.6 309.61,440.1 309.70,420.0 309.78,410.3 309.86,401.7 309.94,414.9 310.03,480.5 310.11,458.4 310.19,416.4 310.27,416.2 310.35,470.2 310.44,437.0 310.52,398.2 310.60,409.8 310.68,417.8 310.76,412.6 310.85,443.7 310.93,394.0 311.01,429.7 311.09,412.8 311.17,457.5 311.26,416.4 311.34,411.0 311.42,438.3 311.50,418.2 311.58,409.5 311.67,397.1 311.75,398.9 311.83,419.9 311.91,429.5 311.99,429.8 312.08,424.0 312.16,423.9 312.24,402.4 312.32,413.5 312.41,418.8 312.49,412.8 312.57,432.1 312.65,402.9 312.73,414.3 312.82,442.6 312.90,418.8 312.98,487.4 313.06,417.8 313.14,400.7 313.23,400.7 313.31,398.3 313.39,416.8 313.47,406.2 313.55,421.1 313.64,389.2 313.72,412.6 313.80,428.2 313.88,430.7 313.96,400.9 314.05,399.4 314.13,459.9 314.21,422.0 314.29,412.0 314.37,407.7 314.46,424.8 314.54,411.6 314.62,398.6 314.70,439.7 314.79,406.7 314.87,419.8 314.95,457.2 315.03,418.2 315.11,395.9 315.20,464.7 315.28,407.2 315.36,427.2 315.44,468.1 315.52,431.1 315.61,409.9 315.69,420.1 315.77,423.0 315.85,404.0 315.93,399.9 316.02,416.3 316.10,431.0 316.18,484.3 316.26,419.0 316.34,419.6 316.43,409.8 316.51,435.7 316.59,411.5 316.67,454.4 316.75,396.5 316.84,417.6 316.92,445.6 317.00,450.6 317.08,423.0 317.16,432.4 317.25,403.2 317.33,419.4 317.41,433.1 317.49,394.5 317.58,416.3 317.66,412.5 317.74,464.1 317.82,431.6 317.90,438.1 317.99,406.9 318.07,421.6 318.15,433.8 318.23,416.4 318.31,416.2 318.40,422.5 318.48,421.6 318.56,386.4 318.64,409.2 318.72,433.8 318.81,435.2 318.89,396.1 318.97,430.3 319.05,406.7 319.13,416.6 319.22,427.5 319.30,447.2 319.38,453.9 319.46,460.0 319.54,427.3 319.63,433.8 319.71,404.4 319.79,447.3 319.87,412.9 319.96,402.2 320.04,439.4 320.12,434.9 320.20,410.3 320.28,444.0 320.37,408.6 320.45,420.0 320.53,429.6 320.61,461.0 320.69,413.6 320.78,402.7 320.86,434.8 320.94,421.5 321.02,447.3 321.10,436.2 321.19,411.3 321.27,414.9 321.35,396.0 321.43,381.7 321.51,447.7 321.60,433.0 321.68,425.2 321.76,413.6 321.84,378.2 321.92,397.7 322.01,408.3 322.09,432.9 322.17,447.7 322.25,395.0 322.34,423.1 322.42,453.0 322.50,416.0 322.58,474.0 322.66,442.4 322.75,407.7 322.83,406.9 322.91,401.5 322.99,426.0 323.07,447.5 323.16,444.8 323.24,425.6 323.32,404.3 323.40,398.7 323.48,396.0 323.57,421.5 323.65,419.9 323.73,414.1 323.81,418.2 323.89,395.3 323.98,416.0 324.06,390.3 324.14,396.1 324.22,398.4 324.30,392.2 324.39,408.3 324.47,415.8 324.55,437.9 324.63,429.9 324.72,420.3 324.80,400.1 324.88,415.9 324.96,400.3 325.04,418.9 325.13,473.8 325.21,431.2 325.29,402.6 325.37,410.2 325.45,460.2 325.54,408.4 325.62,423.3 325.70,458.1 325.78,423.9 325.86,423.5 325.95,414.7 326.03,414.9 326.11,429.2 326.19,425.2 326.27,468.0 326.36,405.7 326.44,421.1 326.52,410.7 326.60,411.7 326.68,431.7 326.77,417.1 326.85,430.7 326.93,462.2 327.01,398.3 327.10,449.4 327.18,408.9 327.26,438.4 327.34,451.0 327.42,476.6 327.51,426.7 327.59,391.1 327.67,414.6 327.75,406.3 327.83,410.9 327.92,430.7 328.00,405.0 328.08,404.7 328.16,442.0 328.24,425.8 328.33,465.5 328.41,414.6 328.49,410.2 328.57,405.2 328.65,401.4 328.74,409.1 328.82,426.0 328.90,419.9 328.98,411.5 329.06,386.7 329.15,417.8 329.23,391.2 329.31,433.8 329.39,393.6 329.48,403.3 329.56,410.8 329.64,399.5 329.72,398.4 329.80,492.9 329.89,456.0 329.97,475.1 330.05,417.8 330.13,496.4 330.21,442.9 330.30,421.2 330.38,409.3 330.46,418.4 330.54,397.1 330.62,419.2 330.71,395.2 330.79,442.3 330.87,434.6 330.95,434.3 331.03,403.9 331.12,419.5 331.20,385.0 331.28,391.9 331.36,407.8 331.44,454.5 331.53,397.6 331.61,405.1 331.69,457.5 331.77,406.7 331.86,411.6 331.94,399.3 332.02,401.6 332.10,412.6 332.18,430.6 332.27,401.4 332.35,431.5 332.43,416.8 332.51,424.8 332.59,429.8 332.68,412.5 332.76,440.3 332.84,425.2 332.92,449.3 333.00,393.7 333.09,446.9 333.17,396.6 333.25,412.8 333.33,430.7 333.41,423.0 333.50,431.4 333.58,413.7 333.66,413.4 333.74,400.6 333.82,422.4 333.91,397.1 333.99,420.3 334.07,387.5 334.15,405.3 334.24,423.2 334.32,415.2 334.40,407.2 334.48,414.6 334.56,411.7 334.65,406.6 334.73,424.8 334.81,427.7 334.89,438.9 334.97,434.6 335.06,395.5 335.14,405.4 335.22,421.8 335.30,431.5 335.38,484.0 335.47,413.3 335.55,426.1 335.63,403.1 335.71,402.3 335.79,392.1 335.88,438.7 335.96,425.1 336.04,415.1 336.12,399.5 336.20,420.7 336.29,477.2 336.37,401.0 336.45,483.0 336.53,411.7 336.62,427.1 336.70,436.2 336.78,417.9 336.86,433.6 336.94,440.4 337.03,404.8 337.11,416.2 337.19,407.3 337.27,408.3 337.35,452.1 337.44,402.2 337.52,414.4 337.60,418.0 337.68,412.4 337.76,394.9 337.85,436.4 337.93,411.3 338.01,402.8 338.09,395.6 338.17,403.1 338.26,428.6 338.34,415.5 338.42,429.7 338.50,438.2 338.58,425.3 338.67,432.8 338.75,409.6 338.83,403.1 338.91,426.7 339.00,396.6 339.08,398.7 339.16,413.5 339.24,385.4 339.32,422.7 339.41,414.1 339.49,441.2 339.57,475.4 339.65,441.7 339.73,463.6 339.82,396.8 339.90,402.3 339.98,429.0 340.06,441.9 340.14,422.3 340.23,413.8 340.31,430.5 340.39,408.7 340.47,437.2 340.55,427.5 340.64,409.5 340.72,402.6 340.80,406.7 340.88,400.7 340.96,399.6 341.05,425.8 341.13,420.4 341.21,420.5 341.29,413.8 341.38,457.2 341.46,391.8 341.54,439.4 341.62,432.2 341.70,453.5 341.79,415.3 341.87,422.2 341.95,419.5 342.03,400.3 342.11,405.8 342.20,428.8 342.28,378.1 342.36,379.8 342.44,387.1 342.52,424.7 342.61,391.5 342.69,397.9 342.77,402.9 342.85,420.3 342.93,91.8 343.02,429.9 343.10,407.9 343.18,429.2 343.26,441.2 343.34,405.0 343.43,401.3 343.51,416.4 343.59,419.0 343.67,420.8 343.75,431.8 343.84,395.3 343.92,414.8 344.00,409.6 344.08,432.2 344.17,403.4 344.25,438.8 344.33,405.7 344.41,443.7 344.49,426.5 344.58,396.2 344.66,448.3 344.74,425.4 344.82,394.3 344.90,432.7 344.99,409.6 345.07,490.6 345.15,434.0 345.23,436.7 345.31,408.6 345.40,424.4 345.48,382.1 345.56,422.1 345.64,426.9 345.72,437.3 345.81,401.3 345.89,434.2 345.97,482.9 346.05,462.5 346.13,425.1 346.22,418.5 346.30,411.2 346.38,433.7 346.46,419.6 346.55,426.0 346.63,475.7 346.71,449.5 346.79,401.7 346.87,402.7 346.96,486.8 347.04,406.2 347.12,446.5 347.20,386.8 347.28,425.0 347.37,414.4 347.45,436.1 347.53,399.4 347.61,414.5 347.69,417.4 347.78,439.7 347.86,407.1 347.94,400.4 348.02,398.8 348.10,416.6 348.19,410.2 348.27,447.4 348.35,394.4 348.43,420.3 348.51,425.2 348.60,373.4 348.68,419.2 348.76,420.0 348.84,401.3 348.93,405.4 349.01,406.5 349.09,419.4 349.17,435.4 349.25,429.0 349.34,435.9 349.42,395.6 349.50,450.3 349.58,420.4 349.66,433.1 349.75,407.6 349.83,408.3 349.91,422.6 349.99,396.7 350.07,435.0 350.16,449.3 350.24,431.7 350.32,417.4 350.40,410.5 350.48,419.2 350.57,475.8 350.65,412.5 350.73,438.1 350.81,427.3 350.89,419.3 350.98,435.8 351.06,428.2 351.14,453.0 351.22,395.1 351.31,416.2 351.39,426.7 351.47,442.5 351.55,417.0 351.63,419.9 351.72,433.4 351.80,411.8 351.88,404.2 351.96,406.5 352.04,391.6 352.13,418.7 352.21,408.6 352.29,425.9 352.37,443.8 352.45,428.2 352.54,431.6 352.62,434.1 352.70,412.4 352.78,442.0 352.86,411.1 352.95,431.1 353.03,394.0 353.11,397.1 353.19,422.0 353.27,380.0 353.36,403.5 353.44,396.5 353.52,401.8 353.60,434.2 353.69,414.6 353.77,402.4 353.85,415.4 353.93,402.5 354.01,413.3 354.10,418.7 354.18,390.6 354.26,403.0 354.34,400.3 354.42,422.7 354.51,447.2 354.59,397.2 354.67,427.0 354.75,406.3 354.83,420.6 354.92,418.4 355.00,390.1 355.08,432.3 355.16,471.4 355.24,433.3 355.33,394.7 355.41,431.8 355.49,417.5 355.57,413.0 355.65,420.3 355.74,448.5 355.82,421.6 355.90,410.3 355.98,412.8 356.07,436.2 356.15,427.0 356.23,415.9 356.31,403.7 356.39,408.3 356.48,410.3 356.56,411.0 356.64,442.9 356.72,443.4 356.80,385.7 356.89,439.5 356.97,426.9 357.05,406.4 357.13,428.3 357.21,464.3 357.30,436.7 357.38,403.3 357.46,440.3 357.54,405.1 357.62,397.5 357.71,444.0 357.79,429.7 357.87,404.0 357.95,426.0 358.03,423.1 358.12,406.7 358.20,394.1 358.28,403.0 358.36,426.7 358.45,407.3 358.53,421.5 358.61,492.1 358.69,423.0 358.77,415.6 358.86,433.3 358.94,417.6 359.02,419.8 359.10,416.7 359.18,410.0 359.27,413.4 359.35,436.5 359.43,411.8 359.51,448.3 359.59,496.4 359.68,418.8 359.76,401.1 359.84,410.4 359.92,413.6 360.00,404.0 360.09,400.0 360.17,436.3 360.25,409.5 360.33,427.8 360.41,429.6 360.50,409.1 360.58,426.6 360.66,398.1 360.74,432.0 360.83,408.5 360.91,414.1 360.99,449.4 361.07,406.5 361.15,435.3 361.24,414.6 361.32,407.8 361.40,398.5 361.48,420.1 361.56,428.1 361.65,399.7 361.73,410.6 361.81,423.6 361.89,411.2 361.97,410.6 362.06,422.1 362.14,407.9 362.22,401.0 362.30,413.3 362.38,397.9 362.47,392.9 362.55,408.6 362.63,406.7 362.71,405.9 362.79,396.9 362.88,444.6 362.96,422.1 363.04,397.1 363.12,403.1 363.21,405.0 363.29,407.5 363.37,458.8 363.45,406.6 363.53,419.9 363.62,402.8 363.70,419.7 363.78,437.1 363.86,401.8 363.94,443.1 364.03,423.0 364.11,463.1 364.19,434.2 364.27,425.6 364.35,403.2 364.44,344.4 364.52,395.8 364.60,401.0 364.68,422.7 364.76,387.4 364.85,394.1 364.93,408.1 365.01,437.6 365.09,424.9 365.17,417.9 365.26,389.7 365.34,409.8 365.42,413.5 365.50,401.4 365.59,438.5 365.67,396.4 365.75,420.7 365.83,388.9 365.91,419.6 366.00,421.0 366.08,484.7 366.16,419.5 366.24,422.3 366.32,406.6 366.41,400.3 366.49,427.7 366.57,411.1 366.65,410.1 366.73,416.2 366.82,417.0 366.90,446.3 366.98,396.5 367.06,426.1 367.14,428.7 367.23,437.0 367.31,404.6 367.39,405.5 367.47,426.6 367.55,409.2 367.64,428.0 367.72,440.6 367.80,438.5 367.88,429.5 367.97,391.8 368.05,417.5 368.13,391.2 368.21,410.7 368.29,419.6 368.38,405.7 368.46,396.7 368.54,402.2 368.62,423.5 368.70,443.3 368.79,412.4 368.87,381.0 368.95,436.1 369.03,446.9 369.11,404.2 369.20,453.4 369.28,428.2 369.36,405.9 369.44,404.1 369.52,378.0 369.61,428.2 369.69,441.7 369.77,414.5 369.85,414.0 369.93,396.9 370.02,414.1 370.10,404.2 370.18,409.4 370.26,419.2 370.34,403.9 370.43,413.8 370.51,395.0 370.59,406.2 370.67,457.8 370.76,429.7 370.84,430.9 370.92,388.5 371.00,403.5 371.08,395.7 371.17,433.8 371.25,392.3 371.33,442.7 371.41,443.4 371.49,423.8 371.58,430.3 371.66,463.4 371.74,400.4 371.82,419.4 371.90,434.5 371.99,387.5 372.07,425.4 372.15,449.2 372.23,427.8 372.31,437.1 372.40,442.5 372.48,403.5 372.56,411.9 372.64,414.6 372.72,394.1 372.81,407.4 372.89,420.3 372.97,406.1 373.05,425.9 373.14,402.8 373.22,474.1 373.30,448.5 373.38,496.4 373.46,439.4 373.55,405.8 373.63,415.1 373.71,422.7 373.79,398.3 373.87,432.2 373.96,417.3 374.04,409.5 374.12,424.9 374.20,417.1 374.28,411.8 374.37,426.7 374.45,391.6 374.53,407.8 374.61,396.3 374.69,424.0 374.78,434.0 374.86,411.3 374.94,427.9 375.02,417.8 375.10,420.1 375.19,443.1 375.27,406.5 375.35,407.7 375.43,452.3 375.52,419.5 375.60,395.1 375.68,410.3 375.76,394.0 375.84,430.6 375.93,420.2 376.01,436.2 376.09,412.5 376.17,408.0 376.25,466.5 376.34,430.8 376.42,427.4 376.50,429.9 376.58,433.9 376.66,393.6 376.75,420.6 376.83,421.3 376.91,425.2 376.99,444.8 377.07,385.8 377.16,392.8 377.24,402.1 377.32,416.0 377.40,413.3 377.48,438.0 377.57,404.7 377.65,411.6 377.73,409.4 377.81,400.1 377.90,432.4 377.98,410.8 378.06,436.4 378.14,481.6 378.22,417.7 378.31,423.6 378.39,412.4 378.47,424.7 378.55,444.2 378.63,404.7 378.72,419.7 378.80,395.8 378.88,439.8 378.96,414.3 379.04,417.5 379.13,417.7 379.21,412.2 379.29,399.6 379.37,416.2 379.45,400.9 379.54,407.9 379.62,413.6 379.70,467.4 379.78,402.1 379.86,416.2 379.95,433.6 380.03,435.7 380.11,404.6 380.19,418.3 380.28,423.4 380.36,395.6 380.44,424.7 380.52,415.0 380.60,434.0 380.69,419.1 380.77,423.8 380.85,459.0 380.93,402.0 381.01,403.9 381.10,439.6 381.18,412.4 381.26,414.9 381.34,409.7 381.42,402.4 381.51,387.7 381.59,414.8 381.67,428.6 381.75,470.7 381.83,413.7 381.92,417.6 382.00,446.7 382.08,420.7 382.16,412.7 382.24,402.7 382.33,430.3 382.41,408.9 382.49,416.6 382.57,421.7 382.66,451.1 382.74,411.8 382.82,448.0 382.90,393.8 382.98,399.2 383.07,406.1 383.15,404.5 383.23,410.0 383.31,395.5 383.39,449.2 383.48,415.6 383.56,408.3 383.64,427.5 383.72,409.4 383.80,410.2 383.89,417.3 383.97,414.9 384.05,400.8 384.13,413.4 384.21,431.9 384.30,400.6 384.38,407.4 384.46,398.3 384.54,445.9 384.62,414.8 384.71,407.9 384.79,424.0 384.87,411.4 384.95,404.1 385.04,424.2 385.12,414.2 385.20,431.7 385.28,423.7 385.36,431.0 385.45,404.8 385.53,452.1 385.61,398.7 385.69,416.5 385.77,406.0 385.86,392.9 385.94,393.8 386.02,456.7 386.10,425.5 386.18,409.7 386.27,405.6 386.35,395.3 386.43,414.3 386.51,462.8 386.59,442.0 386.68,386.4 386.76,416.9 386.84,410.4 386.92,435.7 387.00,407.2 387.09,418.0 387.17,404.2 387.25,413.2 387.33,430.4 387.42,404.7 387.50,414.7 387.58,423.6 387.66,425.5 387.74,404.3 387.83,434.2 387.91,405.3 387.99,415.6 388.07,426.6 388.15,412.3 388.24,400.9 388.32,445.5 388.40,415.8 388.48,439.6 388.56,416.5 388.65,409.9 388.73,413.0 388.81,410.3 388.89,437.9 388.97,399.1 389.06,432.7 389.14,391.2 389.22,403.3 389.30,414.9 389.38,409.2 389.47,441.2 389.55,395.6 389.63,440.0 389.71,427.9 389.80,434.1 389.88,398.0 389.96,423.7 390.04,411.3 390.12,441.7 390.21,413.5 390.29,421.1 390.37,399.6 390.45,410.2 390.53,395.0 390.62,432.2 390.70,439.0 390.78,462.5 390.86,403.7 390.94,431.3 391.03,413.0 391.11,447.0 391.19,416.0 391.27,418.6 391.35,406.6 391.44,402.7 391.52,418.4 391.60,402.7 391.68,417.1 391.76,399.2 391.85,426.6 391.93,438.0 392.01,406.1 392.09,424.6 392.18,418.6 392.26,406.3 392.34,436.5 392.42,445.4 392.50,436.9 392.59,422.4 392.67,416.9 392.75,414.9 392.83,418.2 392.91,398.3 393.00,429.3 393.08,415.6 393.16,417.9 393.24,433.5 393.32,407.2 393.41,403.5 393.49,430.7 393.57,406.2 393.65,407.9 393.73,402.9 393.82,402.1 393.90,420.8 393.98,441.7 394.06,428.0 394.14,419.6 394.23,416.5 394.31,410.0 394.39,425.2 394.47,416.0 394.55,409.8 394.64,424.8 394.72,462.5 394.80,421.2 394.88,442.5 394.97,417.7 395.05,440.4 395.13,421.5 395.21,405.1 395.29,405.5 395.38,457.2 395.46,417.1 395.54,422.2 395.62,429.5 395.70,407.0 395.79,413.8 395.87,399.3 395.95,439.6 396.03,422.2 396.11,434.1 396.20,426.2 396.28,403.4 396.36,440.8 396.44,412.6 396.52,423.4 396.61,487.7 396.69,417.6 396.77,433.7 396.85,407.7 396.93,447.9 397.02,404.0 397.10,414.0 397.18,399.4 397.26,420.9 397.35,437.4 397.43,416.6 397.51,439.8 397.59,432.6 397.67,446.5 397.76,416.8 397.84,438.8 397.92,465.9 398.00,407.5 398.08,442.6 398.17,410.2 398.25,413.7 398.33,429.0 398.41,427.3 398.49,401.3 398.58,408.1 398.66,410.9 398.74,404.6 398.82,415.0 398.90,429.9 398.99,424.4 399.07,404.2 399.15,400.7 399.23,440.4 399.31,400.0 399.40,401.0 399.48,408.6 399.56,404.8 399.64,409.1 399.73,414.6 399.81,410.1 399.89,401.3 399.97,409.4 400.05,429.8 400.14,424.2 400.22,399.8 400.30,421.9 400.38,453.1 400.46,418.7 400.55,410.1 400.63,436.0 400.71,447.6 400.79,406.4 400.87,434.6 400.96,396.5 401.04,441.0 401.12,419.1 401.20,411.4 401.28,394.1 401.37,408.3 401.45,404.4 401.53,392.4 401.61,416.1 401.69,427.3 401.78,427.0 401.86,447.8 401.94,461.4 402.02,417.6 402.11,450.8 402.19,418.5 402.27,425.2 402.35,430.0 402.43,401.4 402.52,448.3 402.60,412.3 402.68,429.0 402.76,467.8 402.84,427.6 402.93,407.0 403.01,450.1 403.09,463.4 403.17,433.1 403.25,434.7 403.34,426.3 403.42,433.6 403.50,417.2 403.58,463.4 403.66,440.3 403.75,431.1 403.83,459.3 403.91,384.0 403.99,447.3 404.07,421.6 404.16,398.0 404.24,403.6 404.32,414.3 404.40,407.9 404.49,399.1 404.57,424.0 404.65,430.2 404.73,442.2 404.81,437.5 404.90,443.9 404.98,436.1 405.06,398.8 405.14,444.9 405.22,395.7 405.31,433.6 405.39,410.5 405.47,440.7 405.55,439.4 405.63,433.7 405.72,420.8 405.80,425.2 405.88,397.5 405.96,429.0 406.04,413.3 406.13,416.3 406.21,407.8 406.29,411.7 406.37,421.0 406.45,412.2 406.54,402.8 406.62,457.0 406.70,417.7 406.78,430.5 406.87,434.2 406.95,417.1 407.03,413.3 407.11,400.6 407.19,426.7 407.28,394.9 407.36,396.2 407.44,430.3 407.52,362.0 407.60,416.7 407.69,442.1 407.77,406.0 407.85,398.3 407.93,413.2 408.01,389.9 408.10,429.8 408.18,448.5 408.26,403.3 408.34,439.2 408.42,406.8 408.51,421.4 408.59,402.8 408.67,444.4 408.75,426.7 408.83,427.9 408.92,422.0 409.00,420.7 409.08,400.9 409.16,412.4 409.25,439.8 409.33,432.5 409.41,408.9 409.49,475.5 409.57,423.1 409.66,436.0 409.74,402.3 409.82,426.6 409.90,409.0 409.98,427.6 410.07,407.5 410.15,411.2 410.23,437.8 410.31,439.4 410.39,404.4 410.48,409.2 410.56,416.2 410.64,436.2 410.72,458.7 410.80,414.7 410.89,392.6 410.97,403.9 411.05,410.9 411.13,416.2 411.21,448.2 411.30,420.0 411.38,431.8 411.46,383.3 411.54,413.5 411.63,412.6 411.71,413.6 411.79,423.1 411.87,398.1 411.95,410.3 412.04,439.8 412.12,407.0 412.20,387.8 412.28,388.2 412.36,405.2 412.45,391.6 412.53,404.0 412.61,417.3 412.69,420.5 412.77,431.1 412.86,387.5 412.94,474.2 413.02,393.6 413.10,415.0 413.18,415.5 413.27,410.4 413.35,417.8 413.43,394.4 413.51,421.9 413.59,391.5 413.68,439.1 413.76,440.0 413.84,451.9 413.92,414.0 414.01,405.2 414.09,407.5 414.17,436.1 414.25,444.6 414.33,445.2 414.42,421.7 414.50,400.5 414.58,410.2 414.66,409.0 414.74,397.3 414.83,422.9 414.91,413.1 414.99,410.3 415.07,406.9 415.15,402.0 415.24,440.3 415.32,430.3 415.40,416.0 415.48,434.2 415.56,413.0 415.65,431.0 415.73,419.4 415.81,398.5 415.89,398.3 415.97,410.5 416.06,436.7 416.14,422.0 416.22,398.6 416.30,429.1 416.39,441.3 416.47,404.3 416.55,437.2 416.63,430.3 416.71,480.6 416.80,496.4 416.88,415.4 416.96,496.4 417.04,414.9 417.12,441.4 417.21,410.9 417.29,398.0 417.37,424.4 417.45,409.7 417.53,423.1 417.62,406.4 417.70,423.4 417.78,426.8 417.86,418.4 417.94,422.8 418.03,404.6 418.11,435.4 418.19,406.8 418.27,423.7 418.35,430.2 418.44,421.9 418.52,387.0 418.60,403.4 418.68,403.8 418.77,422.8 418.85,404.6 418.93,429.1 419.01,414.8 419.09,418.4 419.18,427.2 419.26,413.7 419.34,480.5 419.42,412.8 419.50,403.5 419.59,441.8 419.67,422.2 419.75,406.9 419.83,409.5 419.91,401.4 420.00,412.0 420.08,418.6 420.16,410.6 420.24,397.0 420.32,448.4 420.41,409.0 420.49,391.7 420.57,417.9 420.65,467.1 420.73,487.4 420.82,417.8 420.90,430.3 420.98,416.1 421.06,390.9 421.14,435.7 421.23,416.3 421.31,384.4 421.39,419.5 421.47,403.6 421.56,443.6 421.64,443.8 421.72,420.3 421.80,420.1 421.88,411.6 421.97,435.7 422.05,421.8 422.13,392.7 422.21,415.6 422.29,435.1 422.38,405.8 422.46,410.1 422.54,439.8 422.62,471.6 422.70,448.5 422.79,429.7 422.87,411.8 422.95,407.3 423.03,415.5 423.11,403.6 423.20,449.0 423.28,421.6 423.36,482.6 423.44,415.8 423.52,432.5 423.61,423.5 423.69,447.7 423.77,430.2 423.85,412.5 423.94,416.4 424.02,493.9 424.10,416.1 424.18,412.5 424.26,412.5 424.35,433.3 424.43,418.1 424.51,437.3 424.59,426.5 424.67,417.9 424.76,418.6 424.84,390.6 424.92,436.0 425.00,422.7 425.08,411.5 425.17,466.1 425.25,422.2 425.33,411.7 425.41,401.9 425.49,416.6 425.58,404.9 425.66,405.5 425.74,403.8 425.82,424.4 425.90,427.4 425.99,427.2 426.07,428.6 426.15,423.7 426.23,411.9 426.32,412.3 426.40,445.6 426.48,404.2 426.56,445.4 426.64,434.7 426.73,422.7 426.81,407.9 426.89,440.1 426.97,412.5 427.05,447.4 427.14,418.2 427.22,430.2 427.30,394.3 427.38,417.2 427.46,415.4 427.55,396.3 427.63,411.1 427.71,398.0 427.79,452.0 427.87,424.5 427.96,430.1 428.04,428.4 428.12,385.8 428.20,418.1 428.28,458.0 428.37,423.7 428.45,411.4 428.53,400.5 428.61,418.0 428.70,467.9 428.78,431.9 428.86,438.5 428.94,407.8 429.02,469.1 429.11,439.3 429.19,398.1 429.27,435.9 429.35,463.6 429.43,422.6 429.52,418.0 429.60,395.6 429.68,437.4 429.76,407.6 429.84,427.4 429.93,419.2 430.01,409.5 430.09,408.4 430.17,471.1 430.25,405.9 430.34,437.5 430.42,412.5 430.50,415.8 430.58,438.8 430.66,399.3 430.75,412.1 430.83,406.0 430.91,432.7 430.99,412.5 431.08,427.8 431.16,422.5 431.24,421.1 431.32,452.3 431.40,460.5 431.49,412.9 431.57,451.7 431.65,396.3 431.73,428.8 431.81,406.7 431.90,428.2 431.98,456.0 432.06,421.3 432.14,402.3 432.22,443.0 432.31,429.0 432.39,392.3 432.47,400.2 432.55,419.2 432.63,396.6 432.72,413.9 432.80,417.6 432.88,455.0 432.96,415.0 433.04,397.8 433.13,420.6 433.21,389.1 433.29,442.9 433.37,469.7 433.46,418.7 433.54,413.0 433.62,404.1 433.70,405.6 433.78,415.6 433.87,435.1 433.95,457.6 434.03,423.0 434.11,424.1 434.19,410.9 434.28,393.5 434.36,401.6 434.44,402.3 434.52,419.7 434.60,450.6 434.69,398.0 434.77,429.2 434.85,393.9 434.93,415.3 435.01,422.4 435.10,375.8 435.18,433.7 435.26,436.3 435.34,407.5 435.42,400.9 435.51,389.1 435.59,393.2 435.67,416.9 435.75,413.7 435.84,397.8 435.92,398.2 436.00,415.7 436.08,420.7 436.16,433.8 436.25,479.4 436.33,424.3 436.41,401.7 436.49,412.2 436.57,412.0 436.66,474.0 436.74,405.1 436.82,400.4 436.90,404.8 436.98,426.6 437.07,413.1 437.15,449.9 437.23,408.5 437.31,410.3 437.39,409.2 437.48,390.6 437.56,405.3 437.64,398.7 437.72,412.4 437.80,400.6 437.89,412.2 437.97,470.1 438.05,396.6 438.13,407.0 438.22,407.6 438.30,404.0 438.38,441.3 438.46,411.3 438.54,409.3 438.63,421.5 438.71,403.6 438.79,432.1 438.87,399.7 438.95,416.5 439.04,423.8 439.12,403.3 439.20,401.8 439.28,424.1 439.36,422.6 439.45,429.3 439.53,383.3 439.61,397.3 439.69,449.6 439.77,398.2 439.86,438.1 439.94,405.0 440.02,405.1 440.10,433.8 440.18,424.8 440.27,419.2 440.35,411.8 440.43,392.0 440.51,408.8 440.60,468.9 440.68,459.7 440.76,406.2 440.84,397.9 440.92,395.4 441.01,410.5 441.09,421.6 441.17,441.4 441.25,420.5 441.33,399.9 441.42,417.9 441.50,421.5 441.58,401.2 441.66,416.6 441.74,439.2 441.83,422.5 441.91,402.2 441.99,396.6 442.07,412.7 442.15,417.8 442.24,411.5 442.32,406.0 442.40,425.7 442.48,417.3 442.56,435.6 442.65,395.1 442.73,410.0 442.81,409.4 442.89,393.2 442.98,394.3 443.06,399.3 443.14,422.4 443.22,451.5 443.30,424.4 443.39,389.9 443.47,478.0 443.55,430.4 443.63,419.7 443.71,495.4 443.80,429.6 443.88,414.8 443.96,443.0 444.04,406.7 444.12,423.3 444.21,419.7 444.29,492.1 444.37,456.7 444.45,453.4 444.53,393.2 444.62,434.5 444.70,449.9 444.78,393.0 444.86,461.4 444.94,433.2 445.03,419.0 445.11,410.4 445.19,430.8 445.27,409.0 445.36,412.2 445.44,375.2 445.52,399.3 445.60,469.6 445.68,429.4 445.77,394.1 445.85,405.1 445.93,428.5 446.01,423.3 446.09,439.8 446.18,401.4 446.26,407.9 446.34,447.4 446.42,440.4 446.50,450.4 446.59,402.0 446.67,488.0 446.75,415.2 446.83,426.3 446.91,458.4 447.00,395.8 447.08,426.7 447.16,411.0 447.24,444.7 447.32,403.7 447.41,425.7 447.49,420.7 447.57,425.9 447.65,459.0 447.73,396.3 447.82,419.2 447.90,441.3 447.98,405.1 448.06,401.7 448.15,395.7 448.23,405.6 448.31,407.1 448.39,394.6 448.47,410.2 448.56,408.9 448.64,425.7 448.72,409.5 448.80,435.5 448.88,411.9 448.97,393.8 449.05,407.0 449.13,416.0 449.21,410.1 449.29,422.7 449.38,396.4 449.46,423.7 449.54,423.5 449.62,399.9 449.70,426.4 449.79,436.7 449.87,435.6 449.95,426.3 450.03,412.6 450.11,421.7 450.20,401.7 450.28,410.9 450.36,393.2 450.44,444.7 450.53,371.6 450.61,402.9 450.69,401.1 450.77,441.4 450.85,430.7 450.94,400.9 451.02,407.6 451.10,428.0 451.18,398.8 451.26,390.6 451.35,423.3 451.43,430.8 451.51,435.3 451.59,469.7 451.67,397.7 451.76,437.4 451.84,400.6 451.92,407.7 452.00,423.9 452.08,393.9 452.17,418.7 452.25,445.7 452.33,417.8 452.41,400.2 452.49,412.3 452.58,389.7 452.66,402.0 452.74,410.3 452.82,417.2 452.91,405.3 452.99,437.3 453.07,448.5 453.15,406.8 453.23,415.3 453.32,419.0 453.40,390.0 453.48,416.3 453.56,403.3 453.64,432.2 453.73,443.4 453.81,388.2 453.89,405.3 453.97,422.1 454.05,397.7 454.14,432.7 454.22,421.3 454.30,387.4 454.38,412.4 454.46,398.5 454.55,439.9 454.63,431.4 454.71,401.0 454.79,437.8 454.87,425.0 454.96,437.8 455.04,445.7 455.12,437.1 455.20,432.9 455.29,433.2 455.37,403.0 455.45,415.2 455.53,432.1 455.61,489.4 455.70,409.0 455.78,396.9 455.86,459.3 455.94,414.1 456.02,426.0 456.11,447.0 456.19,436.0 456.27,410.0 456.35,425.8 456.43,420.7 456.52,435.0 456.60,423.3 456.68,412.5 456.76,450.1 456.84,411.2 456.93,438.1 457.01,398.9 457.09,423.0 457.17,410.7 457.25,430.1 457.34,422.7 457.42,420.8 457.50,398.7 457.58,424.9 457.67,430.3 457.75,414.1 457.83,417.0 457.91,453.6 457.99,414.6 458.08,406.3 458.16,411.3 458.24,428.2 458.32,406.2 458.40,402.3 458.49,399.9 458.57,402.1 458.65,425.0 458.73,420.5 458.81,395.9 458.90,441.4 458.98,408.2 459.06,483.9 459.14,416.5 459.22,421.8 459.31,415.9 459.39,416.5 459.47,401.9 459.55,410.0 459.63,393.9 459.72,450.7 459.80,414.6 459.88,418.2 459.96,422.5 460.05,453.2 460.13,423.4 460.21,398.4 460.29,421.9 460.37,396.9 460.46,422.7 460.54,454.5 460.62,417.5 460.70,403.5 460.78,398.9 460.87,445.2 460.95,440.7 461.03,396.4 461.11,416.6 461.19,398.4 461.28,425.6 461.36,421.4 461.44,407.5 461.52,417.0 461.60,436.7 461.69,409.2 461.77,406.5 461.85,419.8 461.93,419.3 462.01,446.5 462.10,409.7 462.18,397.7 462.26,415.5 462.34,407.8 462.43,415.0 462.51,445.0 462.59,437.3 462.67,427.6 462.75,406.2 462.84,422.7 462.92,409.1 463.00,437.6 463.08,402.5 463.16,423.4 463.25,432.2 463.33,400.3 463.41,435.8 463.49,390.9 463.57,410.1 463.66,433.7 463.74,400.9 463.82,464.2 463.90,456.2 463.98,424.4 464.07,414.5 464.15,449.4 464.23,422.4 464.31,422.4 464.39,444.6 464.48,419.8 464.56,410.8 464.64,418.1 464.72,424.9 464.81,427.1 464.89,396.5 464.97,424.8 465.05,421.1 465.13,433.7 465.22,392.2 465.30,440.2 465.38,446.9 465.46,408.8 465.54,448.5 465.63,442.9 465.71,402.5 465.79,424.9 465.87,430.3 465.95,404.9 466.04,444.8 466.12,472.6 466.20,413.7 466.28,395.5 466.36,422.4 466.45,395.3 466.53,404.9 466.61,406.0 466.69,405.4 466.77,417.1 466.86,421.9 466.94,425.7 467.02,466.4 467.10,435.6 467.19,417.8 467.27,434.1 467.35,437.5 467.43,446.9 467.51,476.6 467.60,424.2 467.68,434.6 467.76,477.2 467.84,436.8 467.92,440.0 468.01,412.8 468.09,411.3 468.17,483.8 468.25,427.1 468.33,415.8 468.42,418.6 468.50,404.9 468.58,414.3 468.66,407.0 468.74,437.5 468.83,406.9 468.91,428.5 468.99,401.0 469.07,485.9 469.15,410.7 469.24,418.6 469.32,417.6 469.40,434.6 469.48,429.7 469.57,429.6 469.65,419.4 469.73,408.6 469.81,453.8 469.89,401.9 469.98,430.1 470.06,413.0 470.14,407.0 470.22,410.4 470.30,407.3 470.39,415.9 470.47,433.5 470.55,400.6 470.63,420.4 470.71,424.9 470.80,429.9 470.88,416.3 470.96,454.0 471.04,445.9 471.12,403.9 471.21,427.5 471.29,425.7 471.37,435.9 471.45,400.4 471.53,420.7 471.62,455.5 471.70,408.8 471.78,487.0 471.86,460.9 471.94,429.2 472.03,370.9 472.11,412.5 472.19,417.5 472.27,403.2 472.36,389.7 472.44,449.2 472.52,405.2 472.60,401.7 472.68,421.0 472.77,413.6 472.85,403.5 472.93,430.5 473.01,389.1 473.09,399.0 473.18,407.6 473.26,422.5 473.34,423.4 473.42,435.4 473.50,410.0 473.59,402.9 473.67,396.3 473.75,434.9 473.83,432.5 473.91,400.3 474.00,412.3 474.08,399.7 474.16,405.9 474.24,387.6 474.32,397.0 474.41,411.9 474.49,439.8 474.57,440.8 474.65,435.7 474.74,410.0 474.82,392.7 474.90,401.2 474.98,462.4 475.06,395.7 475.15,385.1 475.23,412.0 475.31,401.3 475.39,442.8 475.47,426.6 475.56,420.8 475.64,412.0 475.72,436.0 475.80,418.0 475.88,426.3 475.97,419.1 476.05,451.9 476.13,437.4 476.21,412.3 476.29,468.9 476.38,413.4 476.46,401.9 476.54,423.1 476.62,443.7 476.70,418.3 476.79,411.4 476.87,448.2 476.95,412.4 477.03,425.5 477.12,409.4 477.20,419.8 477.28,421.3 477.36,410.3 477.44,413.6 477.53,404.7 477.61,444.4 477.69,400.0 477.77,398.0 477.85,420.3 477.94,389.1 478.02,449.0 478.10,439.8 478.18,418.3 478.26,421.0 478.35,434.2 478.43,399.6 478.51,428.6 478.59,437.7 478.67,445.6 478.76,438.1 478.84,422.0 478.92,461.7 479.00,411.2 479.08,402.9 479.17,454.5 479.25,408.4 479.33,420.7 479.41,396.8 479.50,398.5 479.58,434.9 479.66,415.7 479.74,416.3 479.82,406.8 479.91,432.4 479.99,439.2 480.07,422.7 480.15,433.1 480.23,424.7 480.32,408.6 480.40,419.5 480.48,407.4 480.56,476.8 480.64,435.0 480.73,420.0 480.81,402.9 480.89,421.5 480.97,419.6 481.05,422.8 481.14,404.8 481.22,449.0 481.30,422.6 481.38,402.4 481.46,415.0 481.55,413.4 481.63,421.9 481.71,412.2 481.79,385.7 481.88,394.7 481.96,438.7 482.04,431.4 482.12,399.4 482.20,418.1 482.29,428.3 482.37,462.9 482.45,431.5 482.53,426.8 482.61,401.9 482.70,403.0 482.78,487.0 482.86,422.7 482.94,403.1 483.02,418.0 483.11,415.4 483.19,441.9 483.27,415.1 483.35,416.5 483.43,437.5 483.52,451.1 483.60,432.9 483.68,416.7 483.76,414.7 483.84,392.4 483.93,396.6 484.01,390.6 484.09,427.4 484.17,424.1 484.26,405.3 484.34,452.1 484.42,430.0 484.50,389.7 484.58,396.9 484.67,416.0 484.75,400.3 484.83,434.1 484.91,421.9 484.99,428.8 485.08,393.6 485.16,421.0 485.24,418.9 485.32,411.9 485.40,402.6 485.49,412.7 485.57,457.1 485.65,413.7 485.73,401.5 485.81,426.5 485.90,444.9 485.98,408.7 486.06,411.3 486.14,427.6 486.22,406.0 486.31,421.6 486.39,390.5 486.47,421.7 486.55,450.1 486.64,399.5 486.72,386.5 486.80,429.0 486.88,413.2 486.96,447.6 487.05,408.3 487.13,405.5 487.21,398.7 487.29,461.6 487.37,410.7 487.46,455.7 487.54,395.0 487.62,463.2 487.70,402.1 487.78,391.4 487.87,413.3 487.95,457.2 488.03,403.7 488.11,401.6 488.19,413.4 488.28,432.4 488.36,416.0 488.44,433.8 488.52,427.4 488.60,428.9 488.69,430.8 488.77,436.7 488.85,456.3 488.93,403.9 489.02,422.9 489.10,412.5 489.18,406.1 489.26,428.9 489.34,398.1 489.43,419.2 489.51,394.4 489.59,411.1 489.67,427.6 489.75,432.2 489.84,420.7 489.92,402.7 490.00,418.5 490.08,427.2 490.16,398.4 490.25,401.5 490.33,422.9 490.41,396.2 490.49,438.9 490.57,425.0 490.66,408.3 490.74,485.2 490.82,401.7 490.90,469.2 490.98,409.2 491.07,406.7 491.15,424.0 491.23,406.1 491.31,402.6 491.40,434.3 491.48,432.2 491.56,411.7 491.64,406.8 491.72,452.4 491.81,461.6 491.89,405.5 491.97,409.3 492.05,424.6 492.13,455.4 492.22,407.8 492.30,421.2 492.38,449.9 492.46,427.1 492.54,411.7 492.63,399.8 492.71,458.7 492.79,440.0 492.87,422.3 492.95,424.3 493.04,408.7 493.12,409.9 493.20,444.8 493.28,469.1 493.36,432.0 493.45,400.9 493.53,412.2 493.61,431.3 493.69,428.4 493.78,407.4 493.86,413.2 493.94,430.7 494.02,394.2 494.10,429.4 494.19,457.8 494.27,423.8 494.35,419.0 494.43,414.7 494.51,412.9 494.60,432.1 494.68,448.3 494.76,416.0 494.84,424.9 494.92,416.2 495.01,448.6 495.09,451.3 495.17,431.0 495.25,420.3 495.33,418.6 495.42,404.5 495.50,414.9 495.58,425.4 495.66,416.4 495.74,436.8 495.83,400.8 495.91,405.0 495.99,406.8 496.07,414.9 496.16,397.5 496.24,412.9 496.32,429.2 496.40,433.5 496.48,419.6 496.57,426.0 496.65,423.0 496.73,398.7 496.81,428.0 496.89,412.0 496.98,402.0 497.06,413.0 497.14,430.4 497.22,466.0 497.30,412.3 497.39,401.3 497.47,419.1 497.55,404.0 497.63,414.8 497.71,417.3 497.80,429.6 497.88,417.0 497.96,400.9 498.04,457.3 498.12,434.6 498.21,424.2 498.29,453.7 498.37,410.0 498.45,426.9 498.53,395.7 498.62,440.4 498.70,413.1 498.78,423.9 498.86,444.1 498.95,414.3 499.03,395.3 499.11,404.9 499.19,415.1 499.27,404.8 499.36,417.4 499.44,448.7 499.52,429.6 499.60,414.9 499.68,426.6 499.77,438.6 499.85,415.5 499.93,393.9 500.01,402.9 500.09,419.2 500.18,438.1 500.26,410.2 500.34,403.1 500.42,412.1 500.50,484.8 500.59,437.5 500.67,433.0 500.75,430.2 500.83,413.7 500.91,496.4 501.00,387.2 501.08,407.5 501.16,430.5 501.24,408.6 501.33,403.5 501.41,413.1 501.49,441.6 501.57,391.5 501.65,397.5 501.74,426.6 501.82,431.4 501.90,441.2 501.98,419.8 502.06,436.2 502.15,421.0 502.23,459.3 502.31,421.8 502.39,439.3 502.47,412.2 502.56,441.3 502.64,477.0 502.72,400.9 502.80,397.6 502.88,496.4 502.97,415.1 503.05,411.3 503.13,436.4 503.21,468.3 503.29,424.5 503.38,431.4 503.46,451.8 503.54,408.4 503.62,433.2 503.71,447.8 503.79,409.9 503.87,436.6 503.95,419.0 504.03,406.4 504.12,420.1 504.20,394.2 504.28,411.2 504.36,419.4 504.44,422.4 504.53,421.9 504.61,424.5 504.69,424.4 504.77,426.6 504.85,467.3 504.94,463.2 505.02,447.3 505.10,442.8 505.18,411.6 505.26,411.9 505.35,440.5 505.43,402.9 505.51,426.1 505.59,451.0 505.67,427.5 505.76,408.0 505.84,460.6 505.92,441.2 506.00,387.8 506.09,446.4 506.17,440.4 506.25,439.3 506.33,470.2 506.41,416.4 506.50,429.2 506.58,439.5 506.66,428.1 506.74,410.0 506.82,414.6 506.91,395.6 506.99,442.1 507.07,418.1 507.15,401.8 507.23,418.6 507.32,428.7 507.40,411.7 507.48,402.3 507.56,406.4 507.64,391.4 507.73,419.1 507.81,405.8 507.89,401.5 507.97,414.0 508.05,431.0 508.14,409.2 508.22,399.0 508.30,432.7 508.38,399.1 508.47,417.7 508.55,439.8 508.63,410.2 508.71,389.6 508.79,402.9 508.88,430.2 508.96,403.6 509.04,436.8 509.12,439.1 509.20,430.7 509.29,414.0 509.37,472.4 509.45,398.3 509.53,405.0 509.61,448.3 509.70,444.9 509.78,425.3 509.86,439.6 509.94,432.4 510.02,438.8 510.11,415.8 510.19,484.6 510.27,444.0 510.35,424.0 510.43,449.0 510.52,420.9 510.60,442.4 510.68,411.5 510.76,407.3 510.85,426.5 510.93,406.3 511.01,424.8 511.09,419.1 511.17,407.2 511.26,421.9 511.34,407.4 511.42,412.6 511.50,419.2 511.58,417.6 511.67,394.7 511.75,419.2 511.83,397.5 511.91,398.1 511.99,433.4 512.08,404.4 512.16,496.4 512.24,404.3 512.32,399.1 512.40,438.7 512.49,427.9 512.57,431.6 512.65,398.2 512.73,403.4 512.81,413.9 512.90,407.0 512.98,449.3 513.06,399.0 513.14,418.4 513.23,424.7 513.31,416.6 513.39,425.6 513.47,406.2 513.55,439.8 513.64,418.7 513.72,439.2 513.80,415.8 513.88,422.5 513.96,439.1 514.05,416.8 514.13,439.2 514.21,426.8 514.29,417.1 514.37,400.7 514.46,404.1 514.54,433.3 514.62,421.2 514.70,398.6 514.78,401.5 514.87,417.4 514.95,443.2 515.03,414.8 515.11,435.1 515.19,409.5 515.28,401.0 515.36,449.7 515.44,411.3 515.52,422.6 515.61,428.2 515.69,416.0 515.77,436.9 515.85,402.7 515.93,450.1 516.02,411.5 516.10,421.3 516.18,459.8 516.26,403.5 516.34,478.0 516.43,413.7 516.51,430.6 516.59,414.6 516.67,426.7 516.75,404.4 516.84,424.0 516.92,400.5 517.00,416.9 517.08,439.9 517.16,408.5 517.25,430.5 517.33,441.0 517.41,437.4 517.49,421.5 517.57,423.7 517.66,460.7 517.74,419.9 517.82,411.0 517.90,448.0 517.99,396.7 518.07,419.8 518.15,398.9 518.23,415.9 518.31,430.8 518.40,437.5 518.48,452.8 518.56,418.3 518.64,400.2 518.72,458.2 518.81,399.7 518.89,468.8 518.97,399.3 519.05,436.0 519.13,435.0 519.22,419.5 519.30,413.1 519.38,411.7 519.46,421.8 519.54,425.0 519.63,426.8 519.71,416.9 519.79,408.8 519.87,435.9 519.95,408.2 520.04,416.2 520.12,444.1 520.20,412.0 520.28,414.6 520.37,413.2 520.45,431.3 520.53,456.5 520.61,433.0 520.69,423.3 520.78,391.8 520.86,408.6 520.94,394.5 521.02,461.1 521.10,387.9 521.19,391.2 521.27,376.3 521.35,441.2 521.43,446.4 521.51,410.7 521.60,413.9 521.68,421.8 521.76,418.9 521.84,399.3 521.92,465.0 522.01,448.6 522.09,403.4 522.17,397.5 522.25,414.3 522.33,409.6 522.42,404.0 522.50,436.2 522.58,401.6 522.66,415.7 522.75,438.2 522.83,415.8 522.91,401.7 522.99,434.6 523.07,432.9 523.16,410.5 523.24,413.3 523.32,417.0 523.40,389.5 523.48,434.6 523.57,428.4 523.65,403.6 523.73,408.7 523.81,410.5 523.89,425.4 523.98,457.1 524.06,429.4 524.14,421.0 524.22,450.1 524.30,401.0 524.39,400.3 524.47,429.0 524.55,402.8 524.63,389.1 524.71,407.4 524.80,394.3 524.88,441.9 524.96,417.2 525.04,421.5 525.12,481.5 525.21,415.2 525.29,411.2 525.37,444.6 525.45,402.9 525.54,386.6 525.62,440.9 525.70,404.4 525.78,407.0 525.86,408.4 525.95,415.5 526.03,496.4 526.11,403.6 526.19,410.5 526.27,452.0 526.36,447.5 526.44,426.7 526.52,464.1 526.60,414.6 526.68,389.9 526.77,397.8 526.85,418.2 526.93,423.5 527.01,446.7 527.09,399.4 527.18,439.2 527.26,416.0 527.34,407.5 527.42,415.1 527.50,414.7 527.59,420.9 527.67,421.4 527.75,405.0 527.83,382.1 527.92,395.8 528.00,412.9 528.08,435.7 528.16,423.3 528.24,414.0 528.33,399.3 528.41,423.7 528.49,409.5 528.57,433.0 528.65,421.7 528.74,406.1 528.82,422.0 528.90,409.3 528.98,404.0 529.06,417.7 529.15,418.4 529.23,436.3 529.31,470.2 529.39,403.1 529.47,414.2 529.56,417.7 529.64,414.2 529.72,435.3 529.80,402.1 529.88,469.4 529.97,406.4 530.05,412.4 530.13,424.0 530.21,451.0 530.30,430.3 530.38,408.4 530.46,404.5 530.54,458.4 530.62,407.1 530.71,450.7 530.79,463.0 530.87,402.5 530.95,440.4 531.03,421.7 531.12,428.4 531.20,416.3 531.28,399.2 531.36,394.4 531.44,387.3 531.53,462.7 531.61,414.3 531.69,419.2 531.77,411.4 531.85,415.9 531.94,441.7 532.02,445.0 532.10,410.5 532.18,430.9 532.26,418.1 532.35,424.5 532.43,411.2 532.51,433.1 532.59,415.7 532.68,432.3 532.76,425.3 532.84,431.1 532.92,422.0 533.00,405.7 533.09,434.1 533.17,407.9 533.25,443.8 533.33,429.1 533.41,438.1 533.50,442.9 533.58,443.3 533.66,391.4 533.74,405.1 533.82,396.3 533.91,408.6 533.99,397.1 534.07,419.2 534.15,409.7 534.23,419.0 534.32,404.2 534.40,400.9 534.48,407.7 534.56,402.3 534.64,452.1 534.73,448.9 534.81,419.2 534.89,418.4 534.97,421.6 535.06,421.8 535.14,420.8 535.22,475.4 535.30,415.5 535.38,420.3 535.47,413.4 535.55,439.6 535.63,427.2 535.71,423.2 535.79,392.2 535.88,457.3 535.96,393.4 536.04,407.7 536.12,402.9 536.20,411.8 536.29,423.9 536.37,397.9 536.45,466.6 536.53,442.6 536.61,414.9 536.70,429.6 536.78,452.8 536.86,408.7 536.94,423.1 537.02,402.8 537.11,395.9 537.19,428.6 537.27,402.3 537.35,424.4 537.44,411.7 537.52,433.7 537.60,427.0 537.68,423.6 537.76,416.3 537.85,438.7 537.93,387.6 538.01,394.6 538.09,438.0 538.17,402.7 538.26,407.0 538.34,411.3 538.42,405.8 538.50,394.0 538.58,401.3 538.67,433.4 538.75,414.2 538.83,414.1 538.91,442.8 538.99,404.7 539.08,414.4 539.16,431.2 539.24,423.9 539.32,424.8 539.40,421.5 539.49,403.1 539.57,432.4 539.65,402.4 539.73,413.1 539.82,426.9 539.90,422.1 539.98,449.7 540.06,429.7 540.14,459.8 540.23,406.9 540.31,409.5 540.39,496.4 540.47,418.9 540.55,429.8 540.64,430.6 540.72,400.2 540.80,387.6 540.88,403.5 540.96,415.4 541.05,447.7 541.13,398.8 541.21,496.4 541.29,420.1 541.37,393.9 541.46,443.1 541.54,421.3 541.62,421.2 541.70,364.8 541.78,406.4 541.87,393.0 541.95,401.0 542.03,393.3 542.11,381.4 542.20,427.2 542.28,407.6 542.36,390.6 542.44,426.3 542.52,435.2 542.61,428.3 542.69,413.5 542.77,427.2 542.85,402.9 542.93,406.9 543.02,403.8 543.10,445.4 543.18,402.1 543.26,408.6 543.34,444.8 543.43,439.2 543.51,404.7 543.59,401.6 543.67,411.0 543.75,461.5 543.84,381.6 543.92,397.4 544.00,411.5 544.08,408.1 544.16,433.7 544.25,422.5 544.33,391.8 544.41,435.7 544.49,425.9 544.58,445.9 544.66,394.5 544.74,407.7 544.82,401.8 544.90,400.7 544.99,415.5 545.07,443.4 545.15,400.1 545.23,439.2 545.31,408.7 545.40,410.7 545.48,438.2 545.56,426.1 545.64,415.6 545.72,423.3 545.81,401.2 545.89,420.9 545.97,425.5 546.05,406.3 546.13,411.3 546.22,422.4 546.30,445.3 546.38,424.9 546.46,419.4 546.54,412.2 546.63,413.2 546.71,419.7 546.79,441.9 546.87,411.0 546.96,398.4 547.04,431.5 547.12,420.3 547.20,404.6 547.28,447.7 547.37,436.9 547.45,393.0 547.53,396.3 547.61,436.7 547.69,469.3 547.78,454.5 547.86,401.7 547.94,417.2 548.02,428.4 548.10,408.5 548.19,425.3 548.27,412.1 548.35,453.1 548.43,421.2 548.51,438.9 548.60,389.5 548.68,422.7 548.76,445.2 548.84,440.2 548.92,398.0 549.01,401.0 549.09,410.3 549.17,477.2 549.25,398.2 549.33,421.1 549.42,419.1 549.50,422.7 549.58,413.4 549.66,413.5 549.75,435.8 549.83,417.3 549.91,457.8 549.99,391.8 550.07,400.9 550.16,449.3 550.24,408.1 550.32,412.6 550.40,468.8 550.48,438.5 550.57,424.3 550.65,409.5 550.73,436.3 550.81,455.6 550.89,421.4 550.98,434.2 551.06,420.5 551.14,411.3 551.22,437.7 551.30,438.0 551.39,405.4 551.47,398.6 551.55,406.4 551.63,449.5 551.71,434.2 551.80,429.9 551.88,418.9 551.96,427.9 552.04,402.9 552.13,410.6 552.21,415.0 552.29,400.2 552.37,419.5 552.45,432.8 552.54,422.0 552.62,416.6 552.70,413.1 552.78,405.3 552.86,406.6 552.95,423.0 553.03,394.6 553.11,414.3 553.19,409.4 553.27,421.5 553.36,423.6 553.44,413.9 553.52,430.6 553.60,442.9 553.68,393.8 553.77,412.3 553.85,457.3 553.93,420.4 554.01,426.2 554.09,429.9 554.18,409.7 554.26,403.7 554.34,421.1 554.42,407.0 554.51,431.3 554.59,424.7 554.67,418.4 554.75,422.7 554.83,447.5 554.92,422.1 555.00,429.8 555.08,398.1 555.16,413.4 555.24,414.0 555.33,432.4 555.41,414.0 555.49,436.1 555.57,401.6 555.65,416.7 555.74,412.5 555.82,411.7 555.90,412.1 555.98,442.0 556.06,413.7 556.15,420.5 556.23,405.5 556.31,413.2 556.39,424.7 556.47,445.1 556.56,457.2 556.64,410.5 556.72,404.9 556.80,407.2 556.89,408.5 556.97,431.7 557.05,406.7 557.13,411.6 557.21,430.4 557.30,400.4 557.38,395.0 557.46,452.1 557.54,401.6 557.62,398.4 557.71,426.8 557.79,391.7 557.87,436.8 557.95,422.5 558.03,382.9 558.12,392.5 558.20,473.0 558.28,395.8 558.36,419.1 558.44,422.0 558.53,416.9 558.61,403.1 558.69,408.5 558.77,407.4 558.85,435.3 558.94,434.0 559.02,403.6 559.10,409.3 559.18,408.0 559.27,442.0 559.35,421.1 559.43,402.8 559.51,403.1 559.59,414.6 559.68,406.7 559.76,389.5 559.84,421.1 559.92,403.9 560.00,390.1 560.09,445.7 560.17,427.4 560.25,392.8 560.33,460.2 560.41,420.0 560.50,427.1 560.58,426.0 560.66,413.4 560.74,428.3 560.82,470.5 560.91,406.8 560.99,405.0 561.07,409.8 561.15,401.1 561.23,447.0 561.32,426.0 561.40,397.4 561.48,418.8 561.56,453.7 561.65,443.3 561.73,409.4 561.81,423.5 561.89,422.4 561.97,415.3 562.06,452.4 562.14,416.5 562.22,397.3 562.30,416.5 562.38,396.8 562.47,422.6 562.55,445.8 562.63,420.7 562.71,408.7 562.79,404.9 562.88,414.3 562.96,433.3 563.04,408.4 563.12,435.7 563.20,405.3 563.29,402.4 563.37,418.4 563.45,418.7 563.53,462.5 563.61,343.9 563.70,403.1 563.78,442.0 563.86,496.4 563.94,406.4 564.03,447.4 564.11,435.9 564.19,408.0 564.27,426.1 564.35,418.1 564.44,434.0 564.52,427.6 564.60,395.6 564.68,405.4 564.76,412.5 564.85,432.1 564.93,389.4 565.01,409.9 565.09,419.5 565.17,443.9 565.26,425.7 565.34,404.4 565.42,408.9 565.50,405.9 565.58,409.4 565.67,414.3 565.75,408.9 565.83,406.9 565.91,411.3 565.99,413.9 566.08,456.4 566.16,420.7 566.24,426.4 566.32,453.7 566.41,446.3 566.49,452.2 566.57,401.8 566.65,413.2 566.73,431.5 566.82,389.0 566.90,406.3 566.98,407.8 567.06,396.9 567.14,442.1 567.23,424.6 567.31,414.5 567.39,418.1 567.47,446.2 567.55,419.6 567.64,435.3 567.72,460.8 567.80,418.4 567.88,406.7 567.96,427.4 568.05,424.5 568.13,419.5 568.21,493.1 568.29,385.1 568.37,418.0 568.46,386.7 568.54,432.4 568.62,414.5 568.70,411.2 568.79,393.9 568.87,397.6 568.95,413.8 569.03,404.9 569.11,413.3 569.20,406.6 569.28,424.4 569.36,405.9 569.44,431.1 569.52,403.1 569.61,401.5 569.69,403.5 569.77,469.7 569.85,428.9 569.93,425.5 570.02,411.5 570.10,423.0 570.18,400.3 570.26,425.5 570.34,431.3 570.43,417.4 570.51,405.6 570.59,413.7 570.67,417.3 570.75,413.6 570.84,438.9 570.92,417.1 571.00,399.8 571.08,443.5 571.17,407.4 571.25,407.6 571.33,432.6 571.41,414.3 571.49,401.3 571.58,407.5 571.66,424.4 571.74,425.8 571.82,403.5 571.90,444.2 571.99,435.1 572.07,425.8 572.15,395.5 572.23,435.1 572.31,408.8 572.40,444.3 572.48,410.2 572.56,383.8 572.64,448.4 572.72,414.4 572.81,383.2 572.89,412.8 572.97,444.8 573.05,403.9 573.13,461.4 573.22,418.8 573.30,396.3 573.38,424.4 573.46,405.0 573.55,397.7 573.63,400.5 573.71,450.1 573.79,418.1 573.87,461.1 573.96,421.8 574.04,417.3 574.12,409.3 574.20,424.9 574.28,397.7 574.37,392.6 574.45,430.6 574.53,485.8 574.61,464.6 574.69,400.0 574.78,431.8 574.86,417.7 574.94,411.4 575.02,445.9 575.10,419.4 575.19,417.3 575.27,424.5 575.35,407.1 575.43,415.7 575.51,404.5 575.60,408.6 575.68,413.8 575.76,425.7 575.84,414.1 575.92,422.1 576.01,449.8 576.09,404.9 576.17,453.7 576.25,405.8 576.34,399.2 576.42,425.3 576.50,398.6 576.58,403.0 576.66,424.2 576.75,426.5 576.83,407.9 576.91,414.5 576.99,422.6 577.07,431.1 577.16,440.9 577.24,436.7 577.32,406.2 577.40,407.4 577.48,400.6 577.57,436.3 577.65,430.2 577.73,447.7 577.81,443.5 577.89,437.6 577.98,407.6 578.06,473.7 578.14,453.8 578.22,397.0 578.30,441.1 578.39,422.3 578.47,442.0 578.55,414.4 578.63,399.6 578.72,393.5 578.80,424.9 578.88,419.8 578.96,425.3 579.04,430.1 579.13,412.7 579.21,389.2 579.29,428.8 579.37,412.6 579.45,405.7 579.54,444.3 579.62,452.4 579.70,428.5 579.78,388.0 579.86,450.6 579.95,444.5 580.03,416.9 580.11,430.0 580.19,392.6 580.27,385.4 580.36,411.0 580.44,395.7 580.52,407.0 580.60,445.8 580.68,426.4 580.77,413.1 580.85,419.8 580.93,395.6 581.01,425.6 581.10,425.8 581.18,406.3 581.26,451.1 581.34,421.2 581.42,394.2 581.51,425.6 581.59,436.6 581.67,432.2 581.75,420.8 581.83,432.2 581.92,425.4 582.00,404.1 582.08,421.5 582.16,409.3 582.24,448.9 582.33,413.0 582.41,411.4 582.49,401.2 582.57,398.4 582.65,439.3 582.74,401.6 582.82,425.5 582.90,430.5 582.98,462.5 583.06,439.5 583.15,404.8 583.23,420.9 583.31,416.9 583.39,437.3 583.48,411.6 583.56,405.7 583.64,417.3 583.72,420.8 583.80,391.2 583.89,449.7 583.97,460.1 584.05,424.8 584.13,431.4 584.21,432.6 584.30,417.1 584.38,436.8 584.46,414.9 584.54,422.8 584.62,423.2 584.71,350.0 584.79,401.6 584.87,414.8 584.95,461.5 585.03,412.7 585.12,393.8 585.20,431.2 585.28,427.0 585.36,431.6 585.44,414.3 585.53,406.8 585.61,466.0 585.69,405.3 585.77,417.6 585.86,407.7 585.94,413.7 586.02,451.7 586.10,419.8 586.18,437.9 586.27,407.2 586.35,411.6 586.43,409.4 586.51,410.3 586.59,439.0 586.68,403.7 586.76,437.7 586.84,426.0 586.92,420.4 587.00,458.5 587.09,421.0 587.17,428.1 587.25,445.5 587.33,413.6 587.41,420.3 587.50,445.2 587.58,404.5 587.66,416.2 587.74,426.3 587.82,418.5 587.91,431.5 587.99,408.3 588.07,457.8 588.15,433.0 588.24,404.6 588.32,419.1 588.40,383.0 588.48,410.4 588.56,415.1 588.65,394.6 588.73,424.5 588.81,430.3 588.89,397.6 588.97,409.4 589.06,448.3 589.14,399.3 589.22,408.3 589.30,413.7 589.38,417.9 589.47,489.5 589.55,411.8 589.63,417.2 589.71,401.1 589.79,410.2 589.88,456.5 589.96,426.1 590.04,432.6 590.12,427.7 590.20,425.5 590.29,375.2 590.37,401.8 590.45,406.7 590.53,425.5 590.62,427.1 590.70,408.2 590.78,413.5 590.86,425.6 590.94,405.8 591.03,411.4 591.11,412.0 591.19,401.9 591.27,408.1 591.35,448.7 591.44,477.0 591.52,412.3 591.60,417.8 591.68,390.9 591.76,403.6 591.85,404.0 591.93,422.3 592.01,415.6 592.09,429.2 592.17,413.8 592.26,402.9 592.34,468.4 592.42,393.1 592.50,404.3 592.58,428.3 592.67,421.6 592.75,415.9 592.83,415.5 592.91,394.7 593.00,404.5 593.08,414.4 593.16,421.1 593.24,436.7 593.32,385.4 593.41,443.8 593.49,407.0 593.57,400.6 593.65,434.6 593.73,435.0 593.82,405.3 593.90,430.2 593.98,391.2 594.06,397.1 594.14,443.2 594.23,404.2 594.31,416.7 594.39,407.7 594.47,404.3 594.55,416.1 594.64,415.5 594.72,427.1 594.80,412.5 594.88,430.8 594.96,434.1 595.05,422.9 595.13,427.3 595.21,458.0 595.29,402.7 595.38,416.9 595.46,415.7 595.54,392.7 595.62,453.8 595.70,394.9 595.79,475.6 595.87,424.2 595.95,407.0 596.03,496.4 596.11,409.8 596.20,425.4 596.28,413.6 596.36,447.0 596.44,393.8 596.52,426.3 596.61,423.5 596.69,435.9 596.77,415.5 596.85,392.9 596.93,440.9 597.02,404.5 597.10,429.8 597.18,424.3 597.26,440.8 597.34,450.9 597.43,399.6 597.51,414.3 597.59,432.0 597.67,429.6 597.76,405.1 597.84,405.4 597.92,469.7 598.00,424.3 598.08,419.0 598.17,431.9 598.25,455.1 598.33,429.7 598.41,425.4 598.49,461.3 598.58,466.1 598.66,414.9 598.74,416.8 598.82,409.3 598.90,428.2 598.99,429.8 599.07,442.5 599.15,490.0 599.23,410.7 599.31,401.3 599.40,417.7 599.48,424.4 599.56,404.2 599.64,394.8 599.72,428.9 599.81,414.4 599.89,394.2 599.97,451.0 600.05,412.5 600.14,428.0 600.22,453.5 600.30,387.8 600.38,400.4 600.46,401.1 600.55,412.5 600.63,430.9 600.71,428.3 600.79,423.7 600.87,431.3 600.96,418.0 601.04,399.9 601.12,430.4 601.20,414.2 601.28,440.7 601.37,405.1 601.45,436.2 601.53,469.2 601.61,399.6 601.69,401.3 601.78,415.5 601.86,395.3 601.94,441.3 602.02,406.8 602.10,400.8 602.19,425.4 602.27,406.6 602.35,419.7 602.43,442.9 602.51,423.1 602.60,398.9 602.68,421.5 602.76,413.8 602.84,410.9 602.93,412.9 603.01,419.5 603.09,417.0 603.17,427.7 603.25,419.9 603.34,398.9 603.42,434.5 603.50,409.6 603.58,417.7 603.66,412.6 603.75,404.2 603.83,424.9 603.91,425.3 603.99,432.7 604.07,406.5 604.16,404.7 604.24,420.1 604.32,415.2 604.40,426.8 604.48,417.0 604.57,456.1 604.65,408.8 604.73,427.4 604.81,399.6 604.89,422.8 604.98,398.8 605.06,400.4 605.14,412.1 605.22,435.0 605.31,408.4 605.39,475.4 605.47,407.2 605.55,404.8 605.63,438.6 605.72,445.1 605.80,414.4 605.88,435.3 605.96,411.8 606.04,415.4 606.13,392.6 606.21,408.3 606.29,396.5 606.37,408.1 606.45,448.7 606.54,369.5 606.62,401.9 606.70,397.8 606.78,452.3 606.86,399.9 606.95,440.8 607.03,405.9 607.11,409.4 607.19,409.1 607.27,427.5 607.36,437.3 607.44,415.0 607.52,407.6 607.60,395.9 607.69,425.3 607.77,446.1 607.85,416.9 607.93,420.5 608.01,431.2 608.10,405.6 608.18,441.4 608.26,405.8 608.34,419.9 608.42,440.6 608.51,401.7 608.59,406.0 608.67,418.9 608.75,429.1 608.83,420.6 608.92,442.1 609.00,402.4 609.08,487.4 609.16,406.8 609.24,422.2 609.33,416.6 609.41,432.4 609.49,408.6 609.57,448.0 609.65,424.5 609.74,425.3 609.82,400.0 609.90,457.3 609.98,439.9 610.07,426.3 610.15,403.5 610.23,410.8 610.31,409.3 610.39,417.1 610.48,402.6 610.56,400.7 610.64,420.4 610.72,393.7 610.80,425.3 610.89,431.7 610.97,400.5 611.05,408.8 611.13,406.9 611.21,431.5 611.30,431.0 611.38,401.4 611.46,419.8 611.54,408.7 611.62,424.3 611.71,414.3 611.79,428.6 611.87,410.8 611.95,407.6 612.03,432.0 612.12,479.7 612.20,459.4 612.28,413.0 612.36,425.9 612.45,427.8 612.53,414.2 612.61,402.3 612.69,404.6 612.77,443.8 612.86,413.1 612.94,434.7 613.02,429.1 613.10,391.1 613.18,392.5 613.27,407.2 613.35,391.4 613.43,431.3 613.51,440.5 613.59,391.9 613.68,406.4 613.76,397.0 613.84,432.7 613.92,401.9 614.00,424.9 614.09,412.0 614.17,403.3 614.25,407.0 614.33,430.4 614.41,420.3 614.50,410.6 614.58,409.1 614.66,419.2 614.74,398.2 614.83,453.4 614.91,410.3 614.99,466.3 615.07,398.3 615.15,435.7 615.24,463.9 615.32,400.4 615.40,401.5 615.48,442.0 615.56,403.7 615.65,449.3 615.73,408.9 615.81,419.1 615.89,437.0 615.97,410.9 616.06,403.1 616.14,433.9 616.22,400.9 616.30,455.9 616.38,396.3 616.47,421.4 616.55,417.7 616.63,440.1 616.71,405.2 616.79,390.4 616.88,401.0 616.96,422.6 617.04,431.0 617.12,415.4 617.21,422.8 617.29,418.3 617.37,422.9 617.45,413.0 617.53,402.2 617.62,398.9 617.70,430.2 617.78,412.6 617.86,462.8 617.94,417.1 618.03,421.6 618.11,446.0 618.19,397.9 618.27,410.2 618.35,404.9 618.44,438.6 618.52,459.5 618.60,414.7 618.68,474.0 618.76,403.8 618.85,473.9 618.93,444.3 619.01,424.4 619.09,430.2 619.17,427.2 619.26,435.7 619.34,430.6 619.42,444.8 619.50,438.3 619.59,398.8 619.67,409.3 619.75,402.3 619.83,437.5 619.91,451.9 620.00,394.9 620.08,393.4 620.16,407.4 620.24,400.3 620.32,460.3 620.41,407.6 620.49,435.4 620.57,391.2 620.65,462.0 620.73,438.2 620.82,435.0 620.90,423.0 620.98,413.7 621.06,399.6 621.14,411.7 621.23,417.1 621.31,427.6 621.39,430.0 621.47,422.3 621.55,430.6 621.64,417.7 621.72,397.2 621.80,399.8 621.88,408.6 621.97,416.6 622.05,415.4 622.13,394.8 622.21,434.8 622.29,444.2 622.38,397.2 622.46,392.4 622.54,405.6 622.62,412.9 622.70,412.2 622.79,406.0 622.87,440.4 622.95,412.3 623.03,415.8 623.11,400.7 623.20,444.1 623.28,442.2 623.36,420.0 623.44,402.8 623.52,415.8 623.61,459.7 623.69,412.9 623.77,422.4 623.85,413.6 623.93,430.9 624.02,378.6 624.10,435.6 624.18,424.1 624.26,418.2 624.35,468.6 624.43,426.4 624.51,431.7 624.59,408.2 624.67,411.4 624.76,411.5 624.84,402.8 624.92,393.3 625.00,418.7 625.08,425.1 625.17,389.4 625.25,431.1 625.33,415.0 625.41,406.5 625.49,496.4 625.58,418.3 625.66,422.1 625.74,420.6 625.82,395.5 625.90,405.5 625.99,458.9 626.07,427.1 626.15,425.1 626.23,463.3 626.31,400.1 626.40,385.1 626.48,398.6 626.56,437.8 626.64,413.0 626.72,431.4 626.81,408.2 626.89,408.0 626.97,419.7 627.05,408.9 627.14,420.8 627.22,417.1 627.30,419.3 627.38,403.1 627.46,427.2 627.55,436.0 627.63,431.8 627.71,443.1 627.79,463.6 627.87,366.2 627.96,417.5 628.04,405.7 628.12,484.3 628.20,403.4 628.28,436.7 628.37,417.0 628.45,425.1 628.53,425.8 628.61,419.0 628.69,428.8 628.78,422.1 628.86,402.7 628.94,408.3 629.02,429.3 629.10,421.2 629.19,418.4 629.27,406.8 629.35,415.1 629.43,408.5 629.52,420.6 629.60,406.4 629.68,433.5 629.76,397.6 629.84,415.6 629.93,421.9 630.01,396.8 630.09,401.9 630.17,399.5 630.25,395.5 630.34,392.6 630.42,428.5 630.50,405.5 630.58,428.6 630.66,413.9 630.75,415.5 630.83,402.5 630.91,406.8 630.99,423.8 631.07,425.5 631.16,445.6 631.24,425.3 631.32,403.2 631.40,426.3 631.48,425.7 631.57,392.2 631.65,444.6 631.73,407.5 631.81,403.3 631.90,412.2 631.98,415.9 632.06,412.7 632.14,392.7 632.22,410.2 632.31,425.4 632.39,448.4 632.47,419.1 632.55,407.1 632.63,403.1 632.72,431.7 632.80,449.1 632.88,457.8 632.96,435.8 633.04,406.8 633.13,411.3 633.21,408.6 633.29,440.0 633.37,412.7 633.45,427.9 633.54,404.8 633.62,421.0 633.70,414.2 633.78,423.7 633.86,415.6 633.95,419.2 634.03,452.8 634.11,401.0 634.19,393.8 634.28,413.8 634.36,435.9 634.44,444.4 634.52,416.2 634.60,421.7 634.69,436.7 634.77,431.3 634.85,408.3 634.93,406.9 635.01,429.3 635.10,396.1 635.18,404.8 635.26,440.4 635.34,410.6 635.42,442.4 635.51,438.8 635.59,436.6 635.67,414.2 635.75,418.4 635.83,414.4 635.92,409.7 636.00,427.0 636.08,447.4 636.16,449.0 636.24,408.6 636.33,421.4 636.41,420.7 636.49,445.6 636.57,409.3 636.66,441.0 636.74,400.5 636.82,424.1 636.90,413.2 636.98,433.5 637.07,392.9 637.15,449.5 637.23,429.4 637.31,402.3 637.39,439.3 637.48,395.1 637.56,412.7 637.64,405.2 637.72,419.3 637.80,422.0 637.89,439.6 637.97,401.0 638.05,417.6 638.13,392.2 638.21,454.9 638.30,444.4 638.38,411.2 638.46,401.7 638.54,395.1 638.62,413.6 638.71,420.7 638.79,402.8 638.87,424.1 638.95,453.3 639.04,426.4 639.12,407.6 639.20,406.0 639.28,420.8 639.36,403.2 639.45,411.2 639.53,422.4 639.61,428.2 639.69,389.1 639.77,411.5 639.86,438.2 639.94,435.2 640.02,413.5 640.10,415.6 640.18,427.8 640.27,397.4 640.35,418.4 640.43,416.3 640.51,443.2 640.59,443.0 640.68,391.3 640.76,420.0 640.84,416.4 640.92,464.1 641.00,408.7 641.09,481.2 641.17,401.8 641.25,440.0 641.33,412.6 641.42,410.8 641.50,412.5 641.58,411.3 641.66,432.0 641.74,409.3 641.83,403.3 641.91,407.9 641.99,425.9 642.07,412.5 642.15,442.9 642.24,425.1 642.32,411.4 642.40,411.2 642.48,419.7 642.56,419.2 642.65,461.7 642.73,440.2 642.81,399.0 642.89,439.0 642.97,411.3 643.06,409.2 643.14,403.6 643.22,442.5 643.30,436.2 643.38,435.4 643.47,402.9 643.55,409.0 643.63,446.9 643.71,416.2 643.80,418.8 643.88,412.2 643.96,411.6 644.04,427.1 644.12,417.9 644.21,470.3 644.29,442.9 644.37,430.2 644.45,426.5 644.53,415.8 644.62,433.7 644.70,426.2 644.78,418.9 644.86,404.5 644.94,409.0 645.03,421.1 645.11,447.9 645.19,414.4 645.27,418.3 645.35,433.5 645.44,422.7 645.52,417.5 645.60,397.6 645.68,445.7 645.76,421.0 645.85,408.5 645.93,420.4 646.01,427.3 646.09,412.3 646.18,427.8 646.26,432.0 646.34,450.1 646.42,421.2 646.50,439.9 646.59,436.7 646.67,434.8 646.75,400.5 646.83,410.3 646.91,393.2 647.00,450.2 647.08,412.5 647.16,433.7 647.24,437.0 647.32,405.3 647.41,397.0 647.49,416.1 647.57,378.6 647.65,396.5 647.73,394.2 647.82,427.2 647.90,422.9 647.98,423.5 648.06,428.3 648.14,403.9 648.23,413.7 648.31,457.2 648.39,399.9 648.47,420.6 648.56,456.1 648.64,429.4 648.72,415.8 648.80,415.8 648.88,435.8 648.97,429.7 649.05,455.3 649.13,404.2 649.21,417.4 649.29,414.3 649.38,425.1 649.46,406.1 649.54,406.3 649.62,412.3 649.70,435.4 649.79,460.5 649.87,428.1 649.95,408.3 650.03,429.3 650.11,409.4 650.20,448.0 650.28,443.5 650.36,423.1 650.44,442.5 650.52,451.4 650.61,418.0 650.69,424.2 650.77,440.9 650.85,446.7 650.94,416.1 651.02,427.1 651.10,407.3 651.18,404.2 651.26,418.1 651.35,410.3 651.43,422.0 651.51,401.8 651.59,417.4 651.67,398.0 651.76,455.0 651.84,399.8 651.92,403.6 652.00,417.9 652.08,419.8 652.17,419.0 652.25,395.3 652.33,427.2 652.41,421.6 652.49,415.6 652.58,417.1 652.66,405.1 652.74,406.4 652.82,419.5 652.90,452.4 652.99,404.7 653.07,414.8 653.15,403.7 653.23,441.9 653.31,401.0 653.40,432.3 653.48,408.9 653.56,496.0 653.64,403.9 653.73,408.3 653.81,411.5 653.89,437.8 653.97,413.4 654.05,467.8 654.14,408.1 654.22,413.9 654.30,429.9 654.38,400.1 654.46,426.4 654.55,445.0 654.63,405.4 654.71,422.9 654.79,378.0 654.87,427.9 654.96,446.7 655.04,415.6 655.12,403.7 655.20,432.4 655.28,415.9 655.37,422.6 655.45,401.1 655.53,398.4 655.61,437.7 655.69,409.6 655.78,451.8 655.86,403.3 655.94,400.0 656.02,420.0 656.11,403.1 656.19,399.9 656.27,470.3 656.35,430.2 656.43,432.8 656.52,431.1 656.60,399.9 656.68,390.0 656.76,418.0 656.84,412.3 656.93,414.2 657.01,405.9 657.09,467.6 657.17,427.5 657.25,411.9 657.34,412.5 657.42,408.9 657.50,398.3 657.58,424.8 657.66,396.2 657.75,409.5 657.83,404.2 657.91,433.3 657.99,425.0 658.07,406.0 658.16,432.7 658.24,404.4 658.32,398.1 658.40,496.4 658.49,438.0 658.57,430.3 658.65,412.5 658.73,396.2 658.81,391.6 658.90,447.3 658.98,417.3 659.06,422.1 659.14,441.9 659.22,394.4 659.31,415.4 659.39,430.1 659.47,393.4 659.55,397.7 659.63,403.9 659.72,427.2 659.80,392.0 659.88,456.1 659.96,444.7 660.04,451.2 660.13,410.6 660.21,401.0 660.29,420.0 660.37,391.6 660.45,409.4 660.54,404.5 660.62,436.4 660.70,437.1 660.78,425.1 660.87,434.7 660.95,416.0 661.03,424.8 661.11,411.0 661.19,435.5 661.28,397.8 661.36,420.9 661.44,413.7 661.52,406.1 661.60,444.9 661.69,403.2 661.77,409.2 661.85,422.4 661.93,435.8 662.01,398.7 662.10,415.3 662.18,429.5 662.26,426.1 662.34,427.8 662.42,400.1 662.51,402.3 662.59,401.3 662.67,422.1 662.75,443.4 662.83,414.8 662.92,424.5 663.00,395.1 663.08,419.9 663.16,410.7 663.25,398.2 663.33,431.1 663.41,465.4 663.49,402.4 663.57,439.1 663.66,386.3 663.74,399.7 663.82,401.6 663.90,450.0 663.98,408.4 664.07,435.9 664.15,398.0 664.23,460.3 664.31,455.8 664.39,461.3 664.48,454.6 664.56,422.7 664.64,445.8 664.72,436.8 664.80,399.9 664.89,417.2 664.97,441.5 665.05,389.8 665.13,429.2 665.21,407.2 665.30,401.6 665.38,413.1 665.46,416.6 665.54,404.7 665.63,442.1 665.71,434.0 665.79,447.2 665.87,435.0 665.95,414.0 666.04,412.3 666.12,415.9 666.20,404.7 666.28,426.4 666.36,400.8 666.45,415.5 666.53,399.5 666.61,393.1 666.69,421.7 666.77,407.2 666.86,397.1 666.94,410.3 667.02,485.5 667.10,434.8 667.18,453.5 667.27,409.0 667.35,441.6 667.43,416.8 667.51,426.5 667.59,403.6 667.68,398.2 667.76,411.9 667.84,476.9 667.92,424.2 668.01,392.4 668.09,413.1 668.17,403.9 668.25,389.9 668.33,424.2 668.42,399.5 668.50,422.4 668.58,446.8 668.66,413.7 668.74,436.9 668.83,424.9 668.91,433.4 668.99,394.0 669.07,401.4 669.15,402.6 669.24,408.4 669.32,403.9 669.40,445.7 669.48,400.9 669.56,415.2 669.65,431.9 669.73,388.1 669.81,398.0 669.89,438.3 669.97,431.3 670.06,422.9 670.14,444.0 670.22,431.3 670.30,421.2 670.39,447.7 670.47,482.9 670.55,424.7 670.63,449.4 670.71,412.6 670.80,413.6 670.88,431.5 670.96,410.6 671.04,417.5 671.12,406.4 671.21,433.2 671.29,432.9 671.37,399.9 671.45,418.1 671.53,404.9 671.62,398.4 671.70,430.0 671.78,401.4 671.86,440.6 671.94,415.7 672.03,446.8 672.11,442.8 672.19,419.9 672.27,428.3 672.35,425.4 672.44,414.8 672.52,461.9 672.60,416.0 672.68,398.4 672.77,427.2 672.85,469.2 672.93,421.5 673.01,434.6 673.09,410.4 673.18,424.9 673.26,394.4 673.34,425.6 673.42,420.0 673.50,450.9 673.59,421.9 673.67,390.8 673.75,432.3 673.83,414.8 673.91,444.8 674.00,414.0 674.08,408.0 674.16,423.0 674.24,478.5 674.32,464.5 674.41,469.4 674.49,422.6 674.57,406.9 674.65,416.6 674.73,437.1 674.82,394.5 674.90,441.2 674.98,400.0 675.06,414.8 675.15,405.3 675.23,414.7 675.31,414.7 675.39,412.0 675.47,411.3 675.56,399.1 675.64,452.7 675.72,423.2 675.80,406.4 675.88,427.8 675.97,403.0 676.05,403.9 676.13,441.5 676.21,486.8 676.29,409.1 676.38,411.6 676.46,418.6 676.54,438.5 676.62,400.7 676.70,403.7 676.79,496.4 676.87,409.3 676.95,415.0 677.03,432.4 677.11,451.6 677.20,398.4 677.28,405.3 677.36,412.9 677.44,452.1 677.53,417.6 677.61,410.5 677.69,491.0 677.77,422.6 677.85,425.1 677.94,412.6 678.02,455.2 678.10,385.1 678.18,433.8 678.26,465.5 678.35,413.3 678.43,410.2 678.51,413.6 678.59,414.8 678.67,459.5 678.76,393.5 678.84,462.2 678.92,424.5 679.00,438.5 679.08,409.7 679.17,432.4 679.25,384.2 679.33,446.8 679.41,431.7 679.49,389.8 679.58,422.7 679.66,426.3 679.74,435.9 679.82,405.8 679.90,392.1 679.99,425.0 680.07,401.7 680.15,496.4 680.23,413.0 680.32,427.5 680.40,396.5 680.48,432.3 680.56,393.3 680.64,398.9 680.73,480.8 680.81,410.9 680.89,429.3 680.97,417.4 681.05,444.4 681.14,423.7 681.22,425.2 681.30,408.5 681.38,413.0 681.46,409.4 681.55,433.2 681.63,407.8 681.71,444.1 681.79,408.2 681.87,423.1 681.96,439.7 682.04,397.4 682.12,406.4 682.20,413.4 682.28,408.8 682.37,406.4 682.45,410.6 682.53,418.1 682.61,413.7 682.70,408.4 682.78,432.2 682.86,416.0 682.94,432.9 683.02,425.4 683.11,414.4 683.19,445.1 683.27,414.5 683.35,417.0 683.43,397.1 683.52,451.5 683.60,412.2 683.68,425.4 683.76,412.6 683.84,468.6 683.93,409.6 684.01,410.2 684.09,403.5 684.17,393.3 684.25,418.1 684.34,449.5 684.42,414.6 684.50,395.4 684.58,412.3 684.66,414.2 684.75,390.3 684.83,399.6 684.91,408.3 684.99,411.8 685.08,439.1 685.16,451.7 685.24,430.4 685.32,431.4 685.40,387.7 685.49,421.9 685.57,400.6 685.65,400.6 685.73,399.9 685.81,429.9 685.90,428.9 685.98,395.8 686.06,426.7 686.14,448.1 686.22,425.1 686.31,405.1 686.39,430.3 686.47,426.8 686.55,404.2 686.63,402.9 686.72,416.0 686.80,405.1 686.88,439.0 686.96,435.1 687.04,402.9 687.13,425.4 687.21,408.2 687.29,406.1 687.37,385.8 687.46,403.8 687.54,459.6 687.62,407.6 687.70,446.5 687.78,442.8 687.87,427.3 687.95,394.4 688.03,400.2 688.11,418.0 688.19,403.9 688.28,429.8 688.36,423.3 688.44,398.0 688.52,407.9 688.60,466.9 688.69,395.9 688.77,399.4 688.85,443.1 688.93,412.7 689.01,431.7 689.10,412.7 689.18,410.7 689.26,438.2 689.34,489.1 689.42,411.8 689.51,451.3 689.59,388.7 689.67,418.9 689.75,412.0 689.84,425.7 689.92,422.9 690.00,433.4 690.08,398.1 690.16,434.0 690.25,436.0 690.33,420.8 690.41,421.9 690.49,418.8 690.57,433.9 690.66,407.4 690.74,410.2 690.82,416.3 690.90,392.9 690.98,427.3 691.07,431.0 691.15,424.5 691.23,407.4 691.31,426.1 691.39,414.9 691.48,412.1 691.56,402.2 691.64,403.2 691.72,419.0 691.80,433.9 691.89,427.7 691.97,439.3 692.05,431.7 692.13,411.7 692.22,397.2 692.30,400.9 692.38,369.4 692.46,401.9 692.54,474.7 692.63,410.7 692.71,430.1 692.79,418.4 692.87,438.7 692.95,401.1 693.04,404.5 693.12,429.2 693.20,406.6 693.28,394.6 693.36,408.8 693.45,415.8 693.53,437.6 693.61,405.8 693.69,434.1 693.77,404.6 693.86,429.1 693.94,438.4 694.02,403.0 694.10,404.1 694.18,459.3 694.27,398.5 694.35,424.1 694.43,441.4 694.51,427.7 694.60,438.7 694.68,450.8 694.76,400.9 694.84,403.9 694.92,431.8 695.01,409.5 695.09,439.6 695.17,428.8 695.25,405.8 695.33,418.4 695.42,411.4 695.50,432.3 695.58,476.9 695.66,397.8 695.74,404.5 695.83,417.7 695.91,430.4 695.99,441.8 696.07,415.1 696.15,416.5 696.24,482.7 696.32,390.1 696.40,460.7 696.48,420.0 696.56,433.7 696.65,409.3 696.73,400.8 696.81,416.2 696.89,402.4 696.98,426.2 697.06,408.5 697.14,437.8 697.22,444.5 697.30,485.6 697.39,401.7 697.47,422.8 697.55,396.3 697.63,395.3 697.71,368.3 697.80,394.3 697.88,403.7 697.96,404.0 698.04,440.6 698.12,429.0 698.21,466.6 698.29,426.0 698.37,397.7 698.45,423.3 698.53,399.9 698.62,416.0 698.70,419.7 698.78,429.3 698.86,429.5 698.94,423.0 699.03,412.6 699.11,424.7 699.19,419.4 699.27,433.9 699.36,410.4 699.44,420.1 699.52,415.9 699.60,411.6 699.68,429.4 699.77,443.8 699.85,410.4 699.93,410.6 700.01,412.7 700.09,384.0 700.18,429.8 700.26,403.7 700.34,398.7 700.42,411.4 700.50,424.7 700.59,419.1 700.67,422.1 700.75,410.2 700.83,405.0 700.91,407.7 701.00,386.9 701.08,417.4 701.16,406.6 701.24,431.0 701.32,419.2 701.41,420.3 701.49,450.6 701.57,395.6 701.65,413.8 701.74,416.1 701.82,423.3 701.90,413.8 701.98,401.5 702.06,440.2 702.15,411.0 702.23,415.9 702.31,398.6 702.39,396.0 702.47,411.1 702.56,415.4 702.64,428.5 702.72,424.9 702.80,394.4 702.88,433.3 702.97,432.7 703.05,421.9 703.13,410.5 703.21,430.8 703.29,440.3 703.38,393.1 703.46,409.4 703.54,455.0 703.62,400.2 703.70,412.9 703.79,422.8 703.87,435.9 703.95,427.6 704.03,410.3 704.12,412.2 704.20,401.7 704.28,417.6 704.36,440.1 704.44,408.0 704.53,435.9 704.61,410.2 704.69,418.4 704.77,414.3 704.85,391.2 704.94,431.8 705.02,418.0 705.10,405.3 705.18,390.8 705.26,417.7 705.35,398.7 705.43,416.7 705.51,430.2 705.59,428.4 705.67,398.1 705.76,456.2 705.84,438.0 705.92,419.1 706.00,412.8 706.08,417.8 706.17,398.2 706.25,418.0 706.33,405.8 706.41,463.7 706.49,439.6 706.58,457.9 706.66,406.8 706.74,413.9 706.82,405.8 706.91,406.2 706.99,422.9 707.07,452.7 707.15,406.1 707.23,446.5 707.32,408.2 707.40,393.5 707.48,415.4 707.56,430.3 707.64,415.7 707.73,434.1 707.81,496.4 707.89,433.0 707.97,405.0 708.05,401.2 708.14,421.4 708.22,386.3 708.30,413.3 708.38,423.5 708.46,416.6 708.55,399.6 708.63,392.2 708.71,407.4 708.79,433.8 708.87,428.2 708.96,418.7 709.04,416.1 709.12,431.7 709.20,397.0 709.29,436.3 709.37,438.7 709.45,455.4 709.53,435.3 709.61,425.6 709.70,431.6 709.78,404.6 709.86,405.4 709.94,442.5 710.02,409.3 710.11,431.5 710.19,388.0 710.27,408.5 710.35,403.2 710.43,432.8 710.52,414.3 710.60,409.9 710.68,437.5 710.76,440.2 710.84,422.5 710.93,463.5 711.01,401.7 711.09,436.0 711.17,447.8 711.25,412.6 711.34,406.1 711.42,420.1 711.50,431.3 711.58,426.1 711.67,408.3 711.75,400.2 711.83,411.5 711.91,423.0 711.99,401.6 712.08,413.2 712.16,393.7 712.24,418.8 712.32,409.6 712.40,395.6 712.49,405.6 712.57,400.5 712.65,405.2 712.73,385.0 712.81,407.4 712.90,424.0 712.98,414.2 713.06,436.7 713.14,434.4 713.22,407.8 713.31,401.5 713.39,429.2 713.47,430.6 713.55,431.3 713.63,437.4 713.72,410.2 713.80,413.2 713.88,421.2 713.96,413.3 714.05,440.2 714.13,395.4 714.21,438.1 714.29,400.8 714.37,426.8 714.46,427.0 714.54,443.9 714.62,407.2 714.70,419.8 714.78,416.0 714.87,428.9 714.95,404.9 715.03,419.3 715.11,445.1 715.19,439.2 715.28,462.9 715.36,442.4 715.44,455.9 715.52,415.4 715.60,406.3 715.69,424.1 715.77,411.9 715.85,446.7 715.93,401.8 716.01,415.6 716.10,423.4 716.18,475.2 716.26,405.6 716.34,414.0 716.43,420.3 716.51,403.3 716.59,392.8 716.67,426.8 716.75,403.6 716.84,412.0 716.92,414.8 717.00,442.1 717.08,413.9 717.16,398.1 717.25,426.8 717.33,415.9 717.41,402.3 717.49,418.6 717.57,392.9 717.66,422.1 717.74,413.8 717.82,423.5 717.90,438.6 717.98,454.0 718.07,394.4 718.15,397.2 718.23,406.0 718.31,413.4 718.39,473.0 718.48,441.0 718.56,408.6 718.64,414.0 718.72,486.4 718.81,466.9 718.89,428.4 718.97,409.9 719.05,412.4 719.13,405.3 719.22,413.4 719.30,418.6 719.38,483.8 719.46,455.5 719.54,415.9 719.63,417.8 719.71,405.9 719.79,430.1 719.87,437.4 719.95,418.4 720.04,470.9 720.12,434.8 720.20,436.7 720.28,413.7 720.36,437.1 720.45,421.1 720.53,429.0 720.61,459.7 720.69,430.4 720.77,433.9 720.86,419.4 720.94,388.1 721.02,406.9 721.10,421.6 721.19,444.0 721.27,421.7 721.35,421.5 721.43,428.0 721.51,418.6 721.60,410.5 721.68,451.1 721.76,423.1 721.84,404.6 721.92,420.1 722.01,442.7 722.09,435.0 722.17,429.4 722.25,413.9 722.33,412.8 722.42,389.5 722.50,405.8 722.58,396.9 722.66,395.9 722.74,430.6 722.83,496.4 722.91,394.8 722.99,420.0 723.07,412.3 723.15,432.1 723.24,418.8 723.32,413.0 723.40,396.6 723.48,417.3 723.57,408.8 723.65,413.8 723.73,417.5 723.81,420.6 723.89,457.7 723.98,424.6 724.06,468.4 724.14,426.4 724.22,407.4 724.30,455.9 724.39,407.1 724.47,414.5 724.55,422.9 724.63,441.2 724.71,378.0 724.80,455.4 724.88,421.2 724.96,411.5 725.04,433.4 725.12,424.2 725.21,426.4 725.29,433.9 725.37,386.4 725.45,440.6 725.53,411.2 725.62,402.7 725.70,430.1 725.78,447.8 725.86,420.5 725.95,415.4 726.03,412.2 726.11,425.7 726.19,410.2 726.27,414.1 726.36,403.3 726.44,455.8 726.52,405.6 726.60,412.7 726.68,428.8 726.77,415.1 726.85,418.7 726.93,399.2 727.01,396.1 727.09,394.9 727.18,477.8 727.26,444.9 727.34,393.9 727.42,405.1 727.50,386.8 727.59,433.5 727.67,427.8 727.75,406.8 727.83,430.7 727.91,422.1 728.00,447.5 728.08,448.8 728.16,402.1 728.24,424.1 728.33,432.8 728.41,439.8 728.49,401.1 728.57,394.8 728.65,426.0 728.74,406.4 728.82,456.6 728.90,449.8 728.98,390.4 729.06,422.8 729.15,398.8 729.23,405.0 729.31,440.5 729.39,426.3 729.47,402.7 729.56,410.2 729.64,419.7 729.72,448.2 729.80,395.7 729.88,406.9 729.97,439.7 730.05,427.7 730.13,402.4 730.21,418.9 730.29,393.1 730.38,450.2 730.46,417.5 730.54,415.1 730.62,432.7 730.70,421.2 730.79,403.0 730.87,428.9 730.95,439.8 731.03,454.0 731.12,420.2 731.20,459.0 731.28,399.4 731.36,391.9 731.44,441.4 731.53,425.0 731.61,437.1 731.69,405.5 731.77,428.8 731.85,439.2 731.94,405.0 732.02,410.6 732.10,418.6 732.18,460.9 732.26,429.7 732.35,399.6 732.43,404.0 732.51,427.2 732.59,401.3 732.67,420.9 732.76,450.4 732.84,409.4 732.92,428.1 733.00,407.0 733.08,409.3 733.17,421.9 733.25,429.4 733.33,417.0 733.41,427.7 733.50,436.7 733.58,429.3 733.66,426.2 733.74,477.1 733.82,422.7 733.91,386.9 733.99,396.8 734.07,425.2 734.15,421.5 734.23,410.8 734.32,402.3 734.40,436.6 734.48,404.7 734.56,410.7 734.64,441.2 734.73,401.3 734.81,403.2 734.89,420.3 734.97,408.9 735.05,415.1 735.14,420.2 735.22,459.5 735.30,418.9 735.38,417.1 735.46,418.5 735.55,426.7 735.63,407.9 735.71,416.5 735.79,384.1 735.88,406.9 735.96,431.1 736.04,409.2 736.12,421.7 736.20,425.4 736.29,450.2 736.37,421.6 736.45,397.4 736.53,404.3 736.61,399.7 736.70,447.0 736.78,437.2 736.86,389.4 736.94,424.6 737.02,407.2 737.11,456.4 737.19,408.9 737.27,455.0 737.35,410.8 737.43,396.8 737.52,402.4 737.60,413.6 737.68,419.6 737.76,444.8 737.84,450.1 737.93,407.6 738.01,418.0 738.09,450.4 738.17,404.7 738.26,410.3 738.34,418.0 738.42,414.4 738.50,408.2 738.58,408.6 738.67,444.9 738.75,401.9 738.83,400.9 738.91,468.7 738.99,442.3 739.08,416.3 739.16,408.6 739.24,446.5 739.32,440.5 739.40,434.4 739.49,402.6 739.57,414.3 739.65,394.2 739.73,462.8 739.81,496.4 739.90,423.5 739.98,412.0 740.06,427.5 740.14,432.0 740.22,414.0 740.31,404.9 740.39,418.7 740.47,457.4 740.55,408.9 740.64,420.4 740.72,401.5 740.80,399.8 740.88,415.8 740.96,390.6 741.05,408.1 741.13,445.6 741.21,419.5 741.29,416.5 741.37,430.6 741.46,426.1 741.54,405.1 741.62,414.0 741.70,421.7 741.78,399.7 741.87,419.5 741.95,410.8 742.03,422.6 742.11,399.9 742.19,488.2 742.28,434.8 742.36,423.3 742.44,390.2 742.52,409.9 742.60,406.9 742.69,418.4 742.77,433.1 742.85,454.1 742.93,418.4 743.02,458.6 743.10,436.6 743.18,419.8 743.26,408.8 743.34,411.9 743.43,418.5 743.51,406.2 743.59,420.0 743.67,440.0 743.75,413.6 743.84,413.6 743.92,405.0 744.00,405.9 744.08,445.3 744.16,461.3 744.25,419.1 744.33,460.0 744.41,388.5 744.49,475.0 744.57,413.8 744.66,400.5 744.74,402.5 744.82,403.2 744.90,444.9 744.98,386.7 745.07,422.3 745.15,389.1 745.23,424.3 745.31,428.4 745.40,401.7 745.48,470.7 745.56,425.0 745.64,415.8 745.72,438.3 745.81,403.8 745.89,399.9 745.97,451.7 746.05,410.7 746.13,413.6 746.22,434.9 746.30,410.1 746.38,409.2 746.46,404.2 746.54,404.2 746.63,433.5 746.71,455.4 746.79,399.3 746.87,420.0 746.95,421.0 747.04,496.4 747.12,440.3 747.20,395.3 747.28,424.2 747.36,412.3 747.45,416.3 747.53,415.4 747.61,412.2 747.69,418.5 747.78,415.7 747.86,405.4 747.94,441.3 748.02,410.5 748.10,430.5 748.19,419.4 748.27,432.9 748.35,394.5 748.43,413.6 748.51,418.7 748.60,434.5 748.68,422.6 748.76,452.4 748.84,404.2 748.92,425.3 749.01,433.8 749.09,413.1 749.17,394.6 749.25,443.6 749.33,393.4 749.42,431.1 749.50,470.4 749.58,415.6 749.66,424.0 749.74,442.4 749.83,420.1 749.91,444.3 749.99,411.0 750.07,422.7 750.16,458.7 750.24,423.5 750.32,415.4 750.40,442.9 750.48,465.9 750.57,415.3 750.65,423.8 750.73,432.4 750.81,422.3 750.89,404.4 750.98,413.8 751.06,414.8 751.14,429.1 751.22,417.7 751.30,496.4 751.39,392.2 751.47,409.3 751.55,438.9 751.63,409.4 751.71,380.0 751.80,412.1 751.88,395.3 751.96,414.5 752.04,410.8 752.12,420.7 752.21,431.7 752.29,419.1 752.37,484.4 752.45,438.1 752.54,448.0 752.62,404.3 752.70,401.0 752.78,425.2 752.86,430.7 752.95,423.1 753.03,398.6 753.11,496.4 753.19,440.0 753.27,410.7 753.36,408.3 753.44,428.3 753.52,427.0 753.60,433.2 753.68,414.7 753.77,397.7 753.85,410.1 753.93,403.3 754.01,400.2 754.09,380.5 754.18,446.2 754.26,451.8 754.34,412.1 754.42,404.0 754.50,470.4 754.59,424.2 754.67,454.1 754.75,427.5 754.83,430.0 754.92,420.7 755.00,413.0 755.08,480.3 755.16,414.0 755.24,400.0 755.33,405.6 755.41,408.9 755.49,413.3 755.57,410.9 755.65,405.3 755.74,433.4 755.82,465.7 755.90,426.7 755.98,439.5 756.06,423.3 756.15,401.6 756.23,449.6 756.31,425.8 756.39,418.2 756.47,418.9 756.56,440.0 756.64,434.3 756.72,428.5 756.80,432.4 756.88,413.3 756.97,402.1 757.05,415.1 757.13,428.9 757.21,427.9 757.29,455.4 757.38,483.2 757.46,408.8 757.54,471.1 757.62,405.3 757.71,396.1 757.79,399.0 757.87,412.4 757.95,403.9 758.03,496.4 758.12,400.0 758.20,459.3 758.28,422.4 758.36,404.8 758.44,462.3 758.53,408.9 758.61,465.6 758.69,463.4 758.77,434.2 758.85,421.5 758.94,471.3 759.02,412.3 759.10,438.4 759.18,439.4 759.26,409.7 759.35,406.5 759.43,427.8 759.51,484.4 759.59,476.9 759.67,387.9 759.76,422.5 759.84,414.7 759.92,406.4 760.00,493.3 760.09,398.3 760.17,411.9 760.25,425.2 760.33,396.1 760.41,408.3 760.50,419.8 760.58,400.5 760.66,397.4 760.74,387.7 760.82,394.3 760.91,468.0 760.99,418.8 761.07,421.0 761.15,400.5 761.23,406.2 761.32,410.8 761.40,407.0 761.48,433.3 761.56,401.9 761.64,429.4 761.73,429.4 761.81,411.8 761.89,411.9 761.97,410.5 762.05,469.2 762.14,406.3 762.22,407.2 762.30,459.7 762.38,382.3 762.47,405.3 762.55,438.5 762.63,425.2 762.71,409.9 762.79,402.1 762.88,406.4 762.96,449.3 763.04,432.2 763.12,412.4 763.20,423.4 763.29,396.3 763.37,423.2 763.45,424.6 763.53,405.2 763.61,414.5 763.70,404.0 763.78,435.5 763.86,428.0 763.94,399.8 764.02,436.0 764.11,393.3 764.19,425.6 764.27,403.8 764.35,469.3 764.43,407.5 764.52,433.8 764.60,414.2 764.68,411.4 764.76,442.9 764.85,414.5 764.93,436.1 765.01,440.0 765.09,432.1 765.17,412.0 765.26,428.0 765.34,402.3 765.42,428.0 765.50,420.3 765.58,479.5 765.67,414.4 765.75,423.9 765.83,415.7 765.91,410.7 765.99,439.3 766.08,416.7 766.16,410.7 766.24,424.8 766.32,457.1 766.40,453.4 766.49,405.6 766.57,401.0 766.65,432.2 766.73,452.0 766.81,434.8 766.90,415.3 766.98,435.2 767.06,431.1 767.14,424.4 767.23,440.5 767.31,424.3 767.39,415.0 767.47,403.1 767.55,419.4 767.64,410.0 767.72,411.9 767.80,429.3 767.88,440.9 767.96,443.3 768.05,410.5 768.13,405.8 768.21,383.8 768.29,432.5 768.37,496.4 768.46,432.3 768.54,408.9 768.62,411.2 768.70,413.8 768.78,400.1 768.87,430.2 768.95,414.6 769.03,410.4 769.11,395.7 769.19,413.5 769.28,413.9 769.36,413.1 769.44,432.5 769.52,413.5 769.61,444.0 769.69,443.1 769.77,417.4 769.85,421.8 769.93,408.8 770.02,436.7 770.10,399.9 770.18,400.4 770.26,416.7 770.34,419.1 770.43,418.0 770.51,444.0 770.59,418.2 770.67,435.3 770.75,433.0 770.84,456.4 770.92,431.4 771.00,403.3 771.08,398.8 771.16,440.0 771.25,419.0 771.33,416.0 771.41,389.3 771.49,457.2 771.57,411.1 771.66,421.9 771.74,419.2 771.82,405.7 771.90,409.8 771.99,402.2 772.07,420.7 772.15,420.7 772.23,427.4 772.31,434.8 772.40,414.7 772.48,411.6 772.56,419.1 772.64,408.8 772.72,416.4 772.81,416.7 772.89,390.3 772.97,408.5 773.05,394.1 773.13,403.0 773.22,420.0 773.30,433.4 773.38,412.6 773.46,443.1 773.54,425.4 773.63,426.2 773.71,409.5 773.79,446.4 773.87,422.0 773.95,424.3 774.04,400.2 774.12,448.3 774.20,394.7 774.28,440.7 774.37,422.5 774.45,415.6 774.53,430.7 774.61,412.8 774.69,416.6 774.78,444.0 774.86,414.4 774.94,419.3 775.02,428.0 775.10,426.6 775.19,420.9 775.27,400.8 775.35,429.5 775.43,399.3 775.51,411.5 775.60,421.9 775.68,417.8 775.76,401.9 775.84,385.0 775.92,405.3 776.01,427.2 776.09,404.0 776.17,482.2 776.25,424.2 776.33,401.6 776.42,412.4 776.50,406.8 776.58,426.7 776.66,417.2 776.75,405.0 776.83,393.5 776.91,419.1 776.99,432.8 777.07,393.8 777.16,463.8 777.24,415.3 777.32,407.9 777.40,414.4 777.48,406.2 777.57,388.5 777.65,418.7 777.73,416.6 777.81,433.5 777.89,407.8 777.98,412.7 778.06,403.9 778.14,410.5 778.22,422.3 778.30,421.8 778.39,412.2 778.47,414.7 778.55,386.7 778.63,383.0 778.71,386.4 778.80,472.9 778.88,419.8 778.96,397.6 779.04,399.3 779.13,423.9 779.21,471.7 779.29,398.5 779.37,443.1 779.45,425.3 779.54,433.1 779.62,413.9 779.70,414.0 779.78,395.0 779.86,432.9 779.95,403.9 780.03,465.1 780.11,411.2 780.19,405.6 780.27,433.2 780.36,475.3 780.44,430.4 780.52,402.4 780.60,442.2 780.68,456.0 780.77,411.4 780.85,438.5 780.93,397.9 781.01,395.2 781.09,405.8 781.18,452.2 781.26,394.0 781.34,406.2 781.42,425.6 781.51,399.3 781.59,410.3 781.67,411.6 781.75,432.8 781.83,432.8 781.92,415.5 782.00,443.0 782.08,427.4 782.16,412.9 782.24,433.3 782.33,415.2 782.41,407.8 782.49,429.2 782.57,399.5 782.65,423.8 782.74,420.0 782.82,435.1 782.90,403.8 782.98,402.5 783.06,398.6 783.15,416.6 783.23,403.1 783.31,422.4 783.39,426.4 783.47,405.9 783.56,435.9 783.64,417.8 783.72,341.5 783.80,430.7 783.88,413.3 783.97,409.8 784.05,397.0 784.13,428.4 784.21,424.2 784.30,417.1 784.38,411.4 784.46,396.8 784.54,480.3 784.62,401.6 784.71,429.8 784.79,409.4 784.87,419.1 784.95,438.3 785.03,409.4 785.12,441.8 785.20,475.7 785.28,416.2 785.36,415.3 785.44,424.5 785.53,400.7 785.61,435.0 785.69,434.3 785.77,411.1 785.85,420.2 785.94,430.9 786.02,450.0 786.10,440.6 786.18,420.2 786.26,389.6 786.35,417.9 786.43,408.3 786.51,407.0 786.59,457.3 786.68,460.8 786.76,432.3 786.84,431.0 786.92,390.4 787.00,429.5 787.09,425.4 787.17,421.4 787.25,422.8 787.33,381.0 787.41,405.4 787.50,455.6 787.58,411.7 787.66,397.4 787.74,407.9 787.82,430.4 787.91,394.6 787.99,413.1 788.07,416.4 788.15,412.9 788.23,430.8 788.32,397.6 788.40,414.5 788.48,448.2 788.56,427.3 788.64,404.1 788.73,402.9 788.81,414.4 788.89,405.4 788.97,433.3 789.06,399.5 789.14,400.8 789.22,413.0 789.30,457.2 789.38,417.1 789.47,388.3 789.55,432.2 789.63,400.3 789.71,407.2 789.79,401.0 789.88,405.4 789.96,440.9 790.04,428.4 790.12,426.5 790.20,441.9 790.29,416.0 790.37,428.4 790.45,416.6 790.53,415.6 790.61,417.3 790.70,395.3 790.78,421.7 790.86,392.9 790.94,436.6 791.02,403.1 791.11,435.6 791.19,403.7 791.27,437.0 791.35,419.1 791.44,424.7 791.52,429.4 791.60,424.9 791.68,425.0 791.76,407.1 791.85,441.3 791.93,397.7 792.01,415.2 792.09,434.9 792.17,477.6 792.26,418.1 792.34,430.6 792.42,404.3 792.50,413.6 792.58,410.9 792.67,450.0 792.75,399.2 792.83,413.0 792.91,431.5 792.99,413.8 793.08,424.8 793.16,396.4 793.24,392.0 793.32,434.5 793.40,409.8 793.49,418.8 793.57,412.0 793.65,415.6 793.73,430.7 793.82,408.6 793.90,424.9 793.98,401.1 794.06,413.1 794.14,433.7 794.23,409.5 794.31,407.8 794.39,420.7 794.47,434.5 794.55,406.3 794.64,412.8 794.72,407.5" fill="none" stroke="#00dc00" stroke-opacity="0.55" stroke-width="0.7"/><rect x="102" y="140.50" width="713" height="1" fill="#ffffff" fill-opacity="0.34"/><rect x="102" y="199.80" width="713" height="1" fill="#ffffff" fill-opacity="0.34"/><rect x="102" y="259.10" width="713" height="1" fill="#ffffff" fill-opacity="0.34"/><rect x="102" y="318.40" width="713" height="1" fill="#ffffff" fill-opacity="0.34"/><rect x="102" y="377.70" width="713" height="1" fill="#ffffff" fill-opacity="0.34"/><rect x="102" y="437.00" width="713" height="1" fill="#ffffff" fill-opacity="0.34"/><rect x="102" y="495.9" width="713" height="1" fill="#1e1e1e"/>
</svg>
</body></html>
